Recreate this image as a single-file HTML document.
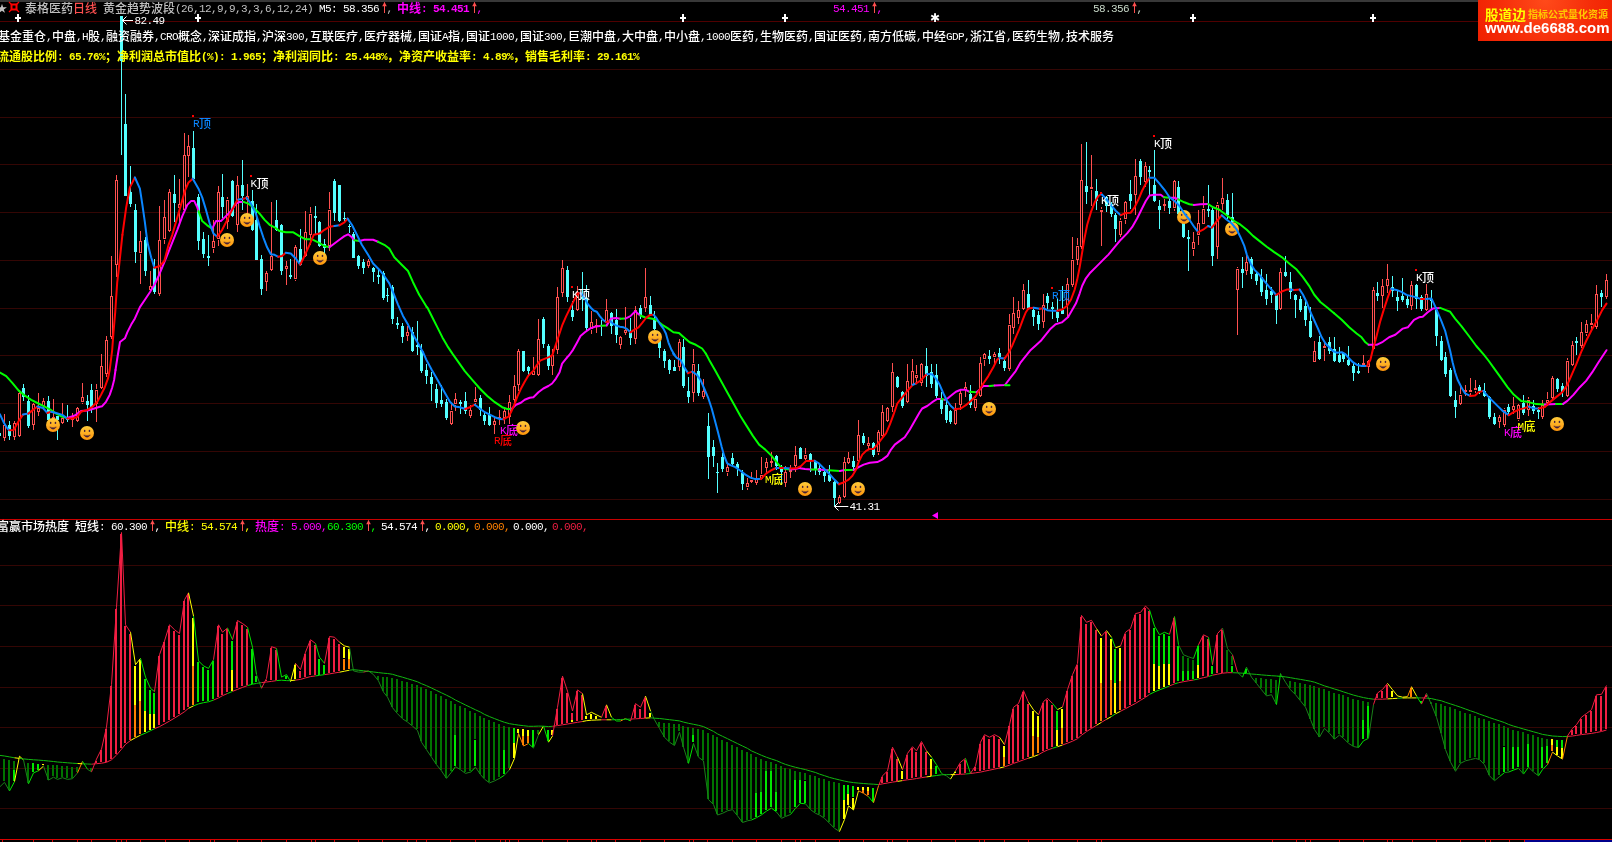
<!DOCTYPE html>
<html><head><meta charset="utf-8"><title>泰格医药 日线</title>
<style>
html,body{margin:0;padding:0;background:#000;}
body{width:1612px;height:842px;position:relative;overflow:hidden;font-family:"Liberation Mono","Noto Sans CJK SC",monospace;}
.t{position:absolute;white-space:pre;line-height:12px;height:12px;}
.a{font-family:"Liberation Mono",monospace;font-size:11px;letter-spacing:-0.6px;}
.c{font-family:"Noto Sans CJK SC","WenQuanYi Zen Hei",sans-serif;font-size:12px;font-weight:500;}
.b{font-weight:700;}
.ab{position:absolute;overflow:visible}
#wrap{position:absolute;left:0;top:0;width:1612px;height:842px;overflow:hidden;will-change:transform;}
svg{position:absolute;left:0;top:0}
.sm{position:absolute;width:14.1px;height:14.1px;border-radius:50%;background:linear-gradient(#ffcc3a,#ffb024 50%,#ff960c);}
</style></head><body>
<div id="wrap">
<svg width="1612" height="842" viewBox="0 0 1612 842">
<g shape-rendering="crispEdges">
<rect x="0" y="21" width="1612" height="1" fill="#500000"/>
<rect x="0" y="69" width="1612" height="1" fill="#340604"/>
<rect x="0" y="117" width="1612" height="1" fill="#340604"/>
<rect x="0" y="164" width="1612" height="1" fill="#340604"/>
<rect x="0" y="212" width="1612" height="1" fill="#340604"/>
<rect x="0" y="260" width="1612" height="1" fill="#340604"/>
<rect x="0" y="308" width="1612" height="1" fill="#340604"/>
<rect x="0" y="355" width="1612" height="1" fill="#340604"/>
<rect x="0" y="403" width="1612" height="1" fill="#340604"/>
<rect x="0" y="451" width="1612" height="1" fill="#340604"/>
<rect x="0" y="499" width="1612" height="1" fill="#340604"/>
<rect x="0" y="519" width="1612" height="1" fill="#c80000"/>
<rect x="0" y="565" width="1612" height="1" fill="#340604"/>
<rect x="0" y="605" width="1612" height="1" fill="#340604"/>
<rect x="0" y="646" width="1612" height="1" fill="#340604"/>
<rect x="0" y="687" width="1612" height="1" fill="#340604"/>
<rect x="0" y="727" width="1612" height="1" fill="#340604"/>
<rect x="0" y="768" width="1612" height="1" fill="#340604"/>
<rect x="0" y="808" width="1612" height="1" fill="#340604"/>
<rect x="0" y="839" width="1612" height="1" fill="#d80000"/>
</g>
<g shape-rendering="crispEdges">
<rect x="-1" y="431" width="1" height="6" fill="#54ffff"/>
<rect x="-2" y="433" width="3" height="3" fill="#54ffff"/>
<rect x="4" y="414" width="1" height="11" fill="#ff5050"/>
<rect x="4" y="438" width="1" height="3" fill="#ff5050"/>
<rect x="3.5" y="425.5" width="2" height="12" fill="#000" stroke="#ff5050" stroke-width="1"/>
<rect x="9" y="421" width="1" height="19" fill="#54ffff"/>
<rect x="8" y="425" width="3" height="11" fill="#54ffff"/>
<rect x="14" y="421" width="1" height="2" fill="#ff5050"/>
<rect x="14" y="437" width="1" height="3" fill="#ff5050"/>
<rect x="13.5" y="423.5" width="2" height="13" fill="#000" stroke="#ff5050" stroke-width="1"/>
<rect x="19" y="390" width="1" height="3" fill="#ff5050"/>
<rect x="19" y="436" width="1" height="1" fill="#ff5050"/>
<rect x="18.5" y="393.5" width="2" height="42" fill="#000" stroke="#ff5050" stroke-width="1"/>
<rect x="23" y="384" width="1" height="17" fill="#54ffff"/>
<rect x="22" y="388" width="3" height="9" fill="#54ffff"/>
<rect x="28" y="395" width="1" height="33" fill="#54ffff"/>
<rect x="27" y="401" width="3" height="25" fill="#54ffff"/>
<rect x="33" y="403" width="1" height="1" fill="#ff5050"/>
<rect x="33" y="425" width="1" height="5" fill="#ff5050"/>
<rect x="32.5" y="404.5" width="2" height="20" fill="#000" stroke="#ff5050" stroke-width="1"/>
<rect x="38" y="393" width="1" height="15" fill="#ff5050"/>
<rect x="38" y="412" width="1" height="4" fill="#ff5050"/>
<rect x="37.5" y="408.5" width="2" height="3" fill="#000" stroke="#ff5050" stroke-width="1"/>
<rect x="43" y="398" width="1" height="3" fill="#ff5050"/>
<rect x="43" y="406" width="1" height="4" fill="#ff5050"/>
<rect x="42.5" y="401.5" width="2" height="4" fill="#000" stroke="#ff5050" stroke-width="1"/>
<rect x="48" y="396" width="1" height="26" fill="#54ffff"/>
<rect x="47" y="401" width="3" height="19" fill="#54ffff"/>
<rect x="53" y="399" width="1" height="18" fill="#ff5050"/>
<rect x="52.5" y="417.5" width="2" height="1" fill="#000" stroke="#ff5050" stroke-width="1"/>
<rect x="57" y="416" width="1" height="24" fill="#54ffff"/>
<rect x="56" y="416" width="3" height="4" fill="#54ffff"/>
<rect x="62" y="403" width="1" height="14" fill="#ff5050"/>
<rect x="62" y="423" width="1" height="1" fill="#ff5050"/>
<rect x="61.5" y="418.5" width="2" height="4" fill="#000" stroke="#ff5050" stroke-width="1"/>
<rect x="67" y="405" width="1" height="17" fill="#54ffff"/>
<rect x="66" y="417" width="3" height="3" fill="#54ffff"/>
<rect x="72" y="413" width="1" height="3" fill="#ff5050"/>
<rect x="72" y="420" width="1" height="7" fill="#ff5050"/>
<rect x="71.5" y="417.5" width="2" height="2" fill="#000" stroke="#ff5050" stroke-width="1"/>
<rect x="77" y="407" width="1" height="1" fill="#ff5050"/>
<rect x="77" y="421" width="1" height="1" fill="#ff5050"/>
<rect x="76.5" y="408.5" width="2" height="12" fill="#000" stroke="#ff5050" stroke-width="1"/>
<rect x="82" y="383" width="1" height="14" fill="#ff5050"/>
<rect x="82" y="403" width="1" height="1" fill="#ff5050"/>
<rect x="81.5" y="397.5" width="2" height="4" fill="#000" stroke="#ff5050" stroke-width="1"/>
<rect x="87" y="395" width="1" height="26" fill="#54ffff"/>
<rect x="86" y="401" width="3" height="4" fill="#54ffff"/>
<rect x="91" y="384" width="1" height="29" fill="#54ffff"/>
<rect x="90" y="390" width="3" height="17" fill="#54ffff"/>
<rect x="96" y="384" width="1" height="5" fill="#ff5050"/>
<rect x="96" y="403" width="1" height="19" fill="#ff5050"/>
<rect x="95.5" y="390.5" width="2" height="13" fill="#000" stroke="#ff5050" stroke-width="1"/>
<rect x="101" y="354" width="1" height="12" fill="#ff5050"/>
<rect x="101" y="388" width="1" height="1" fill="#ff5050"/>
<rect x="100.5" y="366.5" width="2" height="21" fill="#000" stroke="#ff5050" stroke-width="1"/>
<rect x="106" y="336" width="1" height="4" fill="#ff5050"/>
<rect x="106" y="373" width="1" height="4" fill="#ff5050"/>
<rect x="105.5" y="340.5" width="2" height="33" fill="#000" stroke="#ff5050" stroke-width="1"/>
<rect x="111" y="256" width="1" height="40" fill="#ff5050"/>
<rect x="111" y="337" width="1" height="2" fill="#ff5050"/>
<rect x="110.5" y="296.5" width="2" height="40" fill="#000" stroke="#ff5050" stroke-width="1"/>
<rect x="116" y="175" width="1" height="5" fill="#ff5050"/>
<rect x="116" y="265" width="1" height="12" fill="#ff5050"/>
<rect x="115.5" y="180.5" width="2" height="84" fill="#000" stroke="#ff5050" stroke-width="1"/>
<rect x="121" y="16" width="1" height="139" fill="#54ffff"/>
<rect x="120" y="16" width="3" height="45" fill="#54ffff"/>
<rect x="125" y="94" width="1" height="102" fill="#54ffff"/>
<rect x="124" y="124" width="3" height="72" fill="#54ffff"/>
<rect x="130" y="166" width="1" height="41" fill="#54ffff"/>
<rect x="129" y="192" width="3" height="12" fill="#54ffff"/>
<rect x="135" y="204" width="1" height="59" fill="#54ffff"/>
<rect x="134" y="210" width="3" height="42" fill="#54ffff"/>
<rect x="140" y="231" width="1" height="10" fill="#ff5050"/>
<rect x="140" y="254" width="1" height="30" fill="#ff5050"/>
<rect x="139.5" y="241.5" width="2" height="11" fill="#000" stroke="#ff5050" stroke-width="1"/>
<rect x="145" y="237" width="1" height="39" fill="#54ffff"/>
<rect x="144" y="240" width="3" height="31" fill="#54ffff"/>
<rect x="150" y="271" width="1" height="15" fill="#ff5050"/>
<rect x="150" y="290" width="1" height="2" fill="#ff5050"/>
<rect x="149.5" y="286.5" width="2" height="3" fill="#000" stroke="#ff5050" stroke-width="1"/>
<rect x="154" y="259" width="1" height="35" fill="#54ffff"/>
<rect x="153" y="268" width="3" height="24" fill="#54ffff"/>
<rect x="159" y="206" width="1" height="34" fill="#ff5050"/>
<rect x="159" y="293" width="1" height="3" fill="#ff5050"/>
<rect x="158.5" y="240.5" width="2" height="53" fill="#000" stroke="#ff5050" stroke-width="1"/>
<rect x="164" y="200" width="1" height="17" fill="#ff5050"/>
<rect x="164" y="240" width="1" height="4" fill="#ff5050"/>
<rect x="163.5" y="217.5" width="2" height="21" fill="#000" stroke="#ff5050" stroke-width="1"/>
<rect x="169" y="189" width="1" height="4" fill="#ff5050"/>
<rect x="169" y="231" width="1" height="1" fill="#ff5050"/>
<rect x="168.5" y="192.5" width="2" height="38" fill="#000" stroke="#ff5050" stroke-width="1"/>
<rect x="174" y="175" width="1" height="47" fill="#54ffff"/>
<rect x="173" y="194" width="3" height="9" fill="#54ffff"/>
<rect x="179" y="179" width="1" height="25" fill="#ff5050"/>
<rect x="179" y="207" width="1" height="16" fill="#ff5050"/>
<rect x="178.5" y="204.5" width="2" height="3" fill="#000" stroke="#ff5050" stroke-width="1"/>
<rect x="184" y="133" width="1" height="22" fill="#ff5050"/>
<rect x="184" y="210" width="1" height="1" fill="#ff5050"/>
<rect x="183.5" y="155.5" width="2" height="54" fill="#000" stroke="#ff5050" stroke-width="1"/>
<rect x="188" y="135" width="1" height="11" fill="#ff5050"/>
<rect x="188" y="156" width="1" height="21" fill="#ff5050"/>
<rect x="187.5" y="146.5" width="2" height="9" fill="#000" stroke="#ff5050" stroke-width="1"/>
<rect x="193" y="131" width="1" height="49" fill="#54ffff"/>
<rect x="192" y="148" width="3" height="31" fill="#54ffff"/>
<rect x="198" y="194" width="1" height="56" fill="#54ffff"/>
<rect x="197" y="197" width="3" height="44" fill="#54ffff"/>
<rect x="203" y="232" width="1" height="26" fill="#54ffff"/>
<rect x="202" y="239" width="3" height="15" fill="#54ffff"/>
<rect x="208" y="235" width="1" height="31" fill="#54ffff"/>
<rect x="207" y="256" width="3" height="2" fill="#54ffff"/>
<rect x="213" y="220" width="1" height="21" fill="#ff5050"/>
<rect x="213" y="249" width="1" height="4" fill="#ff5050"/>
<rect x="212.5" y="241.5" width="2" height="6" fill="#000" stroke="#ff5050" stroke-width="1"/>
<rect x="218" y="186" width="1" height="6" fill="#ff5050"/>
<rect x="218" y="240" width="1" height="6" fill="#ff5050"/>
<rect x="217.5" y="192.5" width="2" height="46" fill="#000" stroke="#ff5050" stroke-width="1"/>
<rect x="222" y="174" width="1" height="44" fill="#54ffff"/>
<rect x="221" y="197" width="3" height="10" fill="#54ffff"/>
<rect x="227" y="197" width="1" height="2" fill="#ff5050"/>
<rect x="227" y="222" width="1" height="7" fill="#ff5050"/>
<rect x="226.5" y="200.5" width="2" height="21" fill="#000" stroke="#ff5050" stroke-width="1"/>
<rect x="232" y="180" width="1" height="37" fill="#54ffff"/>
<rect x="231" y="181" width="3" height="35" fill="#54ffff"/>
<rect x="237" y="176" width="1" height="9" fill="#ff5050"/>
<rect x="237" y="225" width="1" height="7" fill="#ff5050"/>
<rect x="236.5" y="185.5" width="2" height="39" fill="#000" stroke="#ff5050" stroke-width="1"/>
<rect x="242" y="160" width="1" height="50" fill="#54ffff"/>
<rect x="241" y="185" width="3" height="11" fill="#54ffff"/>
<rect x="247" y="184" width="1" height="12" fill="#ff5050"/>
<rect x="247" y="200" width="1" height="15" fill="#ff5050"/>
<rect x="246.5" y="196.5" width="2" height="3" fill="#000" stroke="#ff5050" stroke-width="1"/>
<rect x="252" y="190" width="1" height="41" fill="#54ffff"/>
<rect x="251" y="201" width="3" height="29" fill="#54ffff"/>
<rect x="256" y="204" width="1" height="56" fill="#54ffff"/>
<rect x="255" y="220" width="3" height="40" fill="#54ffff"/>
<rect x="261" y="255" width="1" height="40" fill="#54ffff"/>
<rect x="260" y="259" width="3" height="30" fill="#54ffff"/>
<rect x="266" y="271" width="1" height="2" fill="#ff5050"/>
<rect x="266" y="282" width="1" height="9" fill="#ff5050"/>
<rect x="265.5" y="273.5" width="2" height="8" fill="#000" stroke="#ff5050" stroke-width="1"/>
<rect x="271" y="202" width="1" height="54" fill="#ff5050"/>
<rect x="271" y="270" width="1" height="1" fill="#ff5050"/>
<rect x="270.5" y="256.5" width="2" height="13" fill="#000" stroke="#ff5050" stroke-width="1"/>
<rect x="276" y="200" width="1" height="31" fill="#54ffff"/>
<rect x="275" y="220" width="3" height="10" fill="#54ffff"/>
<rect x="281" y="224" width="1" height="51" fill="#54ffff"/>
<rect x="280" y="225" width="3" height="46" fill="#54ffff"/>
<rect x="286" y="261" width="1" height="5" fill="#ff5050"/>
<rect x="286" y="269" width="1" height="16" fill="#ff5050"/>
<rect x="285.5" y="266.5" width="2" height="2" fill="#000" stroke="#ff5050" stroke-width="1"/>
<rect x="290" y="259" width="1" height="20" fill="#54ffff"/>
<rect x="289" y="275" width="3" height="2" fill="#54ffff"/>
<rect x="295" y="245" width="1" height="2" fill="#ff5050"/>
<rect x="295" y="280" width="1" height="1" fill="#ff5050"/>
<rect x="294.5" y="247.5" width="2" height="31" fill="#000" stroke="#ff5050" stroke-width="1"/>
<rect x="300" y="229" width="1" height="37" fill="#54ffff"/>
<rect x="299" y="249" width="3" height="16" fill="#54ffff"/>
<rect x="305" y="211" width="1" height="21" fill="#ff5050"/>
<rect x="305" y="256" width="1" height="1" fill="#ff5050"/>
<rect x="304.5" y="232.5" width="2" height="23" fill="#000" stroke="#ff5050" stroke-width="1"/>
<rect x="310" y="207" width="1" height="6" fill="#ff5050"/>
<rect x="310" y="235" width="1" height="10" fill="#ff5050"/>
<rect x="309.5" y="214.5" width="2" height="20" fill="#000" stroke="#ff5050" stroke-width="1"/>
<rect x="315" y="206" width="1" height="29" fill="#54ffff"/>
<rect x="314" y="216" width="3" height="2" fill="#54ffff"/>
<rect x="319" y="221" width="1" height="26" fill="#54ffff"/>
<rect x="318" y="222" width="3" height="24" fill="#54ffff"/>
<rect x="324" y="239" width="1" height="14" fill="#54ffff"/>
<rect x="323" y="244" width="3" height="4" fill="#54ffff"/>
<rect x="329" y="192" width="1" height="17" fill="#ff5050"/>
<rect x="329" y="246" width="1" height="5" fill="#ff5050"/>
<rect x="328.5" y="210.5" width="2" height="35" fill="#000" stroke="#ff5050" stroke-width="1"/>
<rect x="334" y="179" width="1" height="42" fill="#54ffff"/>
<rect x="333" y="181" width="3" height="32" fill="#54ffff"/>
<rect x="339" y="185" width="1" height="37" fill="#54ffff"/>
<rect x="338" y="185" width="3" height="36" fill="#54ffff"/>
<rect x="344" y="212" width="1" height="10" fill="#54ffff"/>
<rect x="343" y="218" width="3" height="1" fill="#54ffff"/>
<rect x="349" y="224" width="1" height="9" fill="#54ffff"/>
<rect x="348" y="226" width="3" height="1" fill="#54ffff"/>
<rect x="353" y="232" width="1" height="26" fill="#54ffff"/>
<rect x="352" y="234" width="3" height="24" fill="#54ffff"/>
<rect x="358" y="255" width="1" height="14" fill="#54ffff"/>
<rect x="357" y="256" width="3" height="10" fill="#54ffff"/>
<rect x="363" y="259" width="1" height="15" fill="#54ffff"/>
<rect x="362" y="262" width="3" height="6" fill="#54ffff"/>
<rect x="368" y="259" width="1" height="2" fill="#ff5050"/>
<rect x="368" y="266" width="1" height="2" fill="#ff5050"/>
<rect x="367.5" y="261.5" width="2" height="4" fill="#000" stroke="#ff5050" stroke-width="1"/>
<rect x="373" y="267" width="1" height="15" fill="#54ffff"/>
<rect x="372" y="268" width="3" height="4" fill="#54ffff"/>
<rect x="378" y="270" width="1" height="14" fill="#54ffff"/>
<rect x="377" y="275" width="3" height="2" fill="#54ffff"/>
<rect x="383" y="271" width="1" height="29" fill="#54ffff"/>
<rect x="382" y="273" width="3" height="25" fill="#54ffff"/>
<rect x="387" y="288" width="1" height="14" fill="#54ffff"/>
<rect x="386" y="295" width="3" height="1" fill="#54ffff"/>
<rect x="392" y="285" width="1" height="39" fill="#54ffff"/>
<rect x="391" y="287" width="3" height="32" fill="#54ffff"/>
<rect x="397" y="317" width="1" height="12" fill="#54ffff"/>
<rect x="396" y="323" width="3" height="2" fill="#54ffff"/>
<rect x="402" y="323" width="1" height="20" fill="#54ffff"/>
<rect x="401" y="326" width="3" height="11" fill="#54ffff"/>
<rect x="407" y="326" width="1" height="6" fill="#ff5050"/>
<rect x="407" y="336" width="1" height="5" fill="#ff5050"/>
<rect x="406.5" y="332.5" width="2" height="3" fill="#000" stroke="#ff5050" stroke-width="1"/>
<rect x="412" y="327" width="1" height="25" fill="#54ffff"/>
<rect x="411" y="332" width="3" height="19" fill="#54ffff"/>
<rect x="417" y="321" width="1" height="34" fill="#54ffff"/>
<rect x="416" y="345" width="3" height="2" fill="#54ffff"/>
<rect x="421" y="344" width="1" height="29" fill="#54ffff"/>
<rect x="420" y="350" width="3" height="21" fill="#54ffff"/>
<rect x="426" y="364" width="1" height="20" fill="#54ffff"/>
<rect x="425" y="370" width="3" height="6" fill="#54ffff"/>
<rect x="431" y="372" width="1" height="29" fill="#54ffff"/>
<rect x="430" y="377" width="3" height="7" fill="#54ffff"/>
<rect x="436" y="384" width="1" height="24" fill="#54ffff"/>
<rect x="435" y="389" width="3" height="14" fill="#54ffff"/>
<rect x="441" y="385" width="1" height="22" fill="#54ffff"/>
<rect x="440" y="400" width="3" height="4" fill="#54ffff"/>
<rect x="446" y="399" width="1" height="21" fill="#54ffff"/>
<rect x="445" y="402" width="3" height="16" fill="#54ffff"/>
<rect x="451" y="403" width="1" height="7" fill="#ff5050"/>
<rect x="451" y="424" width="1" height="1" fill="#ff5050"/>
<rect x="450.5" y="411.5" width="2" height="12" fill="#000" stroke="#ff5050" stroke-width="1"/>
<rect x="455" y="393" width="1" height="6" fill="#ff5050"/>
<rect x="455" y="405" width="1" height="6" fill="#ff5050"/>
<rect x="454.5" y="399.5" width="2" height="4" fill="#000" stroke="#ff5050" stroke-width="1"/>
<rect x="460" y="400" width="1" height="14" fill="#54ffff"/>
<rect x="459" y="402" width="3" height="2" fill="#54ffff"/>
<rect x="465" y="392" width="1" height="22" fill="#54ffff"/>
<rect x="464" y="401" width="3" height="10" fill="#54ffff"/>
<rect x="470" y="405" width="1" height="5" fill="#ff5050"/>
<rect x="470" y="416" width="1" height="2" fill="#ff5050"/>
<rect x="469.5" y="410.5" width="2" height="5" fill="#000" stroke="#ff5050" stroke-width="1"/>
<rect x="475" y="387" width="1" height="12" fill="#ff5050"/>
<rect x="475" y="403" width="1" height="2" fill="#ff5050"/>
<rect x="474.5" y="399.5" width="2" height="2" fill="#000" stroke="#ff5050" stroke-width="1"/>
<rect x="480" y="395" width="1" height="21" fill="#54ffff"/>
<rect x="479" y="398" width="3" height="12" fill="#54ffff"/>
<rect x="484" y="413" width="1" height="12" fill="#54ffff"/>
<rect x="483" y="415" width="3" height="6" fill="#54ffff"/>
<rect x="489" y="407" width="1" height="19" fill="#54ffff"/>
<rect x="488" y="415" width="3" height="10" fill="#54ffff"/>
<rect x="494" y="416" width="1" height="5" fill="#ff5050"/>
<rect x="494" y="425" width="1" height="9" fill="#ff5050"/>
<rect x="493.5" y="421.5" width="2" height="3" fill="#000" stroke="#ff5050" stroke-width="1"/>
<rect x="499" y="410" width="1" height="7" fill="#ff5050"/>
<rect x="499" y="420" width="1" height="5" fill="#ff5050"/>
<rect x="498.5" y="417.5" width="2" height="1" fill="#000" stroke="#ff5050" stroke-width="1"/>
<rect x="504" y="407" width="1" height="4" fill="#ff5050"/>
<rect x="504" y="418" width="1" height="6" fill="#ff5050"/>
<rect x="503.5" y="411.5" width="2" height="6" fill="#000" stroke="#ff5050" stroke-width="1"/>
<rect x="509" y="395" width="1" height="7" fill="#ff5050"/>
<rect x="509" y="417" width="1" height="7" fill="#ff5050"/>
<rect x="508.5" y="402.5" width="2" height="14" fill="#000" stroke="#ff5050" stroke-width="1"/>
<rect x="514" y="375" width="1" height="11" fill="#ff5050"/>
<rect x="514" y="400" width="1" height="5" fill="#ff5050"/>
<rect x="513.5" y="386.5" width="2" height="13" fill="#000" stroke="#ff5050" stroke-width="1"/>
<rect x="518" y="349" width="1" height="2" fill="#ff5050"/>
<rect x="518" y="385" width="1" height="6" fill="#ff5050"/>
<rect x="517.5" y="351.5" width="2" height="33" fill="#000" stroke="#ff5050" stroke-width="1"/>
<rect x="523" y="351" width="1" height="21" fill="#54ffff"/>
<rect x="522" y="351" width="3" height="20" fill="#54ffff"/>
<rect x="528" y="366" width="1" height="9" fill="#54ffff"/>
<rect x="527" y="367" width="3" height="4" fill="#54ffff"/>
<rect x="533" y="357" width="1" height="14" fill="#ff5050"/>
<rect x="532.5" y="371.5" width="2" height="3" fill="#000" stroke="#ff5050" stroke-width="1"/>
<rect x="538" y="319" width="1" height="20" fill="#ff5050"/>
<rect x="538" y="375" width="1" height="1" fill="#ff5050"/>
<rect x="537.5" y="339.5" width="2" height="35" fill="#000" stroke="#ff5050" stroke-width="1"/>
<rect x="543" y="317" width="1" height="31" fill="#54ffff"/>
<rect x="542" y="319" width="3" height="25" fill="#54ffff"/>
<rect x="548" y="344" width="1" height="26" fill="#54ffff"/>
<rect x="547" y="346" width="3" height="20" fill="#54ffff"/>
<rect x="552" y="349" width="1" height="6" fill="#ff5050"/>
<rect x="552" y="366" width="1" height="9" fill="#ff5050"/>
<rect x="551.5" y="355.5" width="2" height="10" fill="#000" stroke="#ff5050" stroke-width="1"/>
<rect x="557" y="287" width="1" height="10" fill="#ff5050"/>
<rect x="557" y="350" width="1" height="4" fill="#ff5050"/>
<rect x="556.5" y="297.5" width="2" height="52" fill="#000" stroke="#ff5050" stroke-width="1"/>
<rect x="562" y="260" width="1" height="8" fill="#ff5050"/>
<rect x="562" y="293" width="1" height="4" fill="#ff5050"/>
<rect x="561.5" y="268.5" width="2" height="24" fill="#000" stroke="#ff5050" stroke-width="1"/>
<rect x="567" y="266" width="1" height="36" fill="#54ffff"/>
<rect x="566" y="270" width="3" height="27" fill="#54ffff"/>
<rect x="572" y="301" width="1" height="20" fill="#54ffff"/>
<rect x="571" y="310" width="3" height="7" fill="#54ffff"/>
<rect x="577" y="286" width="1" height="6" fill="#ff5050"/>
<rect x="577" y="310" width="1" height="1" fill="#ff5050"/>
<rect x="576.5" y="292.5" width="2" height="17" fill="#000" stroke="#ff5050" stroke-width="1"/>
<rect x="582" y="272" width="1" height="39" fill="#54ffff"/>
<rect x="581" y="297" width="3" height="2" fill="#54ffff"/>
<rect x="586" y="285" width="1" height="46" fill="#54ffff"/>
<rect x="585" y="299" width="3" height="29" fill="#54ffff"/>
<rect x="591" y="311" width="1" height="11" fill="#ff5050"/>
<rect x="591" y="330" width="1" height="4" fill="#ff5050"/>
<rect x="590.5" y="322.5" width="2" height="6" fill="#000" stroke="#ff5050" stroke-width="1"/>
<rect x="596" y="319" width="1" height="6" fill="#ff5050"/>
<rect x="596" y="326" width="1" height="7" fill="#ff5050"/>
<rect x="595.5" y="325.5" width="2" height="1" fill="#000" stroke="#ff5050" stroke-width="1"/>
<rect x="601" y="320" width="1" height="16" fill="#54ffff"/>
<rect x="600" y="325" width="3" height="1" fill="#54ffff"/>
<rect x="606" y="299" width="1" height="11" fill="#ff5050"/>
<rect x="606" y="324" width="1" height="2" fill="#ff5050"/>
<rect x="605.5" y="310.5" width="2" height="12" fill="#000" stroke="#ff5050" stroke-width="1"/>
<rect x="611" y="312" width="1" height="22" fill="#54ffff"/>
<rect x="610" y="313" width="3" height="13" fill="#54ffff"/>
<rect x="616" y="309" width="1" height="34" fill="#54ffff"/>
<rect x="615" y="320" width="3" height="15" fill="#54ffff"/>
<rect x="620" y="336" width="1" height="1" fill="#ff5050"/>
<rect x="620" y="345" width="1" height="4" fill="#ff5050"/>
<rect x="619.5" y="337.5" width="2" height="7" fill="#000" stroke="#ff5050" stroke-width="1"/>
<rect x="625" y="307" width="1" height="23" fill="#ff5050"/>
<rect x="625" y="333" width="1" height="2" fill="#ff5050"/>
<rect x="624.5" y="330.5" width="2" height="2" fill="#000" stroke="#ff5050" stroke-width="1"/>
<rect x="630" y="318" width="1" height="27" fill="#54ffff"/>
<rect x="629" y="332" width="3" height="6" fill="#54ffff"/>
<rect x="635" y="306" width="1" height="4" fill="#ff5050"/>
<rect x="635" y="339" width="1" height="5" fill="#ff5050"/>
<rect x="634.5" y="310.5" width="2" height="28" fill="#000" stroke="#ff5050" stroke-width="1"/>
<rect x="640" y="305" width="1" height="14" fill="#54ffff"/>
<rect x="639" y="308" width="3" height="8" fill="#54ffff"/>
<rect x="645" y="268" width="1" height="29" fill="#ff5050"/>
<rect x="645" y="308" width="1" height="4" fill="#ff5050"/>
<rect x="644.5" y="297.5" width="2" height="10" fill="#000" stroke="#ff5050" stroke-width="1"/>
<rect x="650" y="296" width="1" height="20" fill="#54ffff"/>
<rect x="649" y="305" width="3" height="10" fill="#54ffff"/>
<rect x="654" y="311" width="1" height="19" fill="#54ffff"/>
<rect x="653" y="320" width="3" height="9" fill="#54ffff"/>
<rect x="659" y="337" width="1" height="21" fill="#54ffff"/>
<rect x="658" y="341" width="3" height="7" fill="#54ffff"/>
<rect x="664" y="349" width="1" height="19" fill="#54ffff"/>
<rect x="663" y="351" width="3" height="10" fill="#54ffff"/>
<rect x="669" y="359" width="1" height="15" fill="#54ffff"/>
<rect x="668" y="360" width="3" height="10" fill="#54ffff"/>
<rect x="674" y="360" width="1" height="11" fill="#54ffff"/>
<rect x="673" y="367" width="3" height="4" fill="#54ffff"/>
<rect x="679" y="339" width="1" height="4" fill="#ff5050"/>
<rect x="679" y="367" width="1" height="4" fill="#ff5050"/>
<rect x="678.5" y="342.5" width="2" height="24" fill="#000" stroke="#ff5050" stroke-width="1"/>
<rect x="683" y="339" width="1" height="49" fill="#54ffff"/>
<rect x="682" y="347" width="3" height="39" fill="#54ffff"/>
<rect x="688" y="377" width="1" height="26" fill="#54ffff"/>
<rect x="687" y="391" width="3" height="6" fill="#54ffff"/>
<rect x="693" y="349" width="1" height="14" fill="#ff5050"/>
<rect x="693" y="392" width="1" height="10" fill="#ff5050"/>
<rect x="692.5" y="364.5" width="2" height="28" fill="#000" stroke="#ff5050" stroke-width="1"/>
<rect x="698" y="364" width="1" height="32" fill="#54ffff"/>
<rect x="697" y="371" width="3" height="22" fill="#54ffff"/>
<rect x="703" y="379" width="1" height="12" fill="#ff5050"/>
<rect x="703" y="397" width="1" height="2" fill="#ff5050"/>
<rect x="702.5" y="391.5" width="2" height="5" fill="#000" stroke="#ff5050" stroke-width="1"/>
<rect x="708" y="413" width="1" height="66" fill="#54ffff"/>
<rect x="707" y="426" width="3" height="31" fill="#54ffff"/>
<rect x="713" y="440" width="1" height="27" fill="#54ffff"/>
<rect x="712" y="447" width="3" height="9" fill="#54ffff"/>
<rect x="717" y="463" width="1" height="30" fill="#54ffff"/>
<rect x="716" y="472" width="3" height="1" fill="#54ffff"/>
<rect x="722" y="453" width="1" height="19" fill="#54ffff"/>
<rect x="721" y="457" width="3" height="12" fill="#54ffff"/>
<rect x="727" y="463" width="1" height="4" fill="#ff5050"/>
<rect x="727" y="473" width="1" height="3" fill="#ff5050"/>
<rect x="726.5" y="467.5" width="2" height="4" fill="#000" stroke="#ff5050" stroke-width="1"/>
<rect x="732" y="453" width="1" height="12" fill="#54ffff"/>
<rect x="731" y="458" width="3" height="6" fill="#54ffff"/>
<rect x="737" y="462" width="1" height="14" fill="#54ffff"/>
<rect x="736" y="464" width="3" height="4" fill="#54ffff"/>
<rect x="742" y="470" width="1" height="20" fill="#54ffff"/>
<rect x="741" y="473" width="3" height="11" fill="#54ffff"/>
<rect x="747" y="478" width="1" height="5" fill="#ff5050"/>
<rect x="747" y="488" width="1" height="2" fill="#ff5050"/>
<rect x="746.5" y="483.5" width="2" height="3" fill="#000" stroke="#ff5050" stroke-width="1"/>
<rect x="751" y="472" width="1" height="7" fill="#ff5050"/>
<rect x="751" y="482" width="1" height="1" fill="#ff5050"/>
<rect x="750.5" y="480.5" width="2" height="1" fill="#000" stroke="#ff5050" stroke-width="1"/>
<rect x="756" y="470" width="1" height="9" fill="#ff5050"/>
<rect x="756" y="483" width="1" height="2" fill="#ff5050"/>
<rect x="755.5" y="478.5" width="2" height="4" fill="#000" stroke="#ff5050" stroke-width="1"/>
<rect x="761" y="457" width="1" height="17" fill="#ff5050"/>
<rect x="761" y="478" width="1" height="1" fill="#ff5050"/>
<rect x="760.5" y="475.5" width="2" height="3" fill="#000" stroke="#ff5050" stroke-width="1"/>
<rect x="766" y="458" width="1" height="4" fill="#ff5050"/>
<rect x="766" y="468" width="1" height="6" fill="#ff5050"/>
<rect x="765.5" y="462.5" width="2" height="5" fill="#000" stroke="#ff5050" stroke-width="1"/>
<rect x="771" y="452" width="1" height="9" fill="#ff5050"/>
<rect x="771" y="463" width="1" height="4" fill="#ff5050"/>
<rect x="770.5" y="461.5" width="2" height="1" fill="#000" stroke="#ff5050" stroke-width="1"/>
<rect x="776" y="455" width="1" height="15" fill="#54ffff"/>
<rect x="775" y="456" width="3" height="10" fill="#54ffff"/>
<rect x="781" y="465" width="1" height="20" fill="#54ffff"/>
<rect x="780" y="467" width="3" height="5" fill="#54ffff"/>
<rect x="785" y="466" width="1" height="6" fill="#ff5050"/>
<rect x="785" y="483" width="1" height="4" fill="#ff5050"/>
<rect x="784.5" y="472.5" width="2" height="10" fill="#000" stroke="#ff5050" stroke-width="1"/>
<rect x="790" y="465" width="1" height="5" fill="#ff5050"/>
<rect x="790" y="472" width="1" height="6" fill="#ff5050"/>
<rect x="789.5" y="470.5" width="2" height="1" fill="#000" stroke="#ff5050" stroke-width="1"/>
<rect x="795" y="446" width="1" height="9" fill="#ff5050"/>
<rect x="795" y="466" width="1" height="6" fill="#ff5050"/>
<rect x="794.5" y="455.5" width="2" height="10" fill="#000" stroke="#ff5050" stroke-width="1"/>
<rect x="800" y="447" width="1" height="12" fill="#54ffff"/>
<rect x="799" y="448" width="3" height="11" fill="#54ffff"/>
<rect x="805" y="448" width="1" height="6" fill="#ff5050"/>
<rect x="805" y="459" width="1" height="1" fill="#ff5050"/>
<rect x="804.5" y="455.5" width="2" height="3" fill="#000" stroke="#ff5050" stroke-width="1"/>
<rect x="810" y="453" width="1" height="19" fill="#54ffff"/>
<rect x="809" y="454" width="3" height="7" fill="#54ffff"/>
<rect x="815" y="461" width="1" height="14" fill="#54ffff"/>
<rect x="814" y="462" width="3" height="7" fill="#54ffff"/>
<rect x="819" y="465" width="1" height="10" fill="#54ffff"/>
<rect x="818" y="468" width="3" height="4" fill="#54ffff"/>
<rect x="824" y="470" width="1" height="12" fill="#54ffff"/>
<rect x="823" y="472" width="3" height="4" fill="#54ffff"/>
<rect x="829" y="465" width="1" height="17" fill="#54ffff"/>
<rect x="828" y="475" width="3" height="6" fill="#54ffff"/>
<rect x="834" y="481" width="1" height="25" fill="#54ffff"/>
<rect x="833" y="482" width="3" height="16" fill="#54ffff"/>
<rect x="839" y="495" width="1" height="2" fill="#ff5050"/>
<rect x="839" y="503" width="1" height="1" fill="#ff5050"/>
<rect x="838.5" y="497.5" width="2" height="5" fill="#000" stroke="#ff5050" stroke-width="1"/>
<rect x="844" y="457" width="1" height="5" fill="#ff5050"/>
<rect x="844" y="497" width="1" height="1" fill="#ff5050"/>
<rect x="843.5" y="462.5" width="2" height="34" fill="#000" stroke="#ff5050" stroke-width="1"/>
<rect x="848" y="452" width="1" height="7" fill="#ff5050"/>
<rect x="848" y="463" width="1" height="1" fill="#ff5050"/>
<rect x="847.5" y="458.5" width="2" height="4" fill="#000" stroke="#ff5050" stroke-width="1"/>
<rect x="853" y="456" width="1" height="14" fill="#54ffff"/>
<rect x="852" y="461" width="3" height="6" fill="#54ffff"/>
<rect x="858" y="420" width="1" height="15" fill="#ff5050"/>
<rect x="858" y="461" width="1" height="1" fill="#ff5050"/>
<rect x="857.5" y="435.5" width="2" height="25" fill="#000" stroke="#ff5050" stroke-width="1"/>
<rect x="863" y="433" width="1" height="12" fill="#54ffff"/>
<rect x="862" y="436" width="3" height="7" fill="#54ffff"/>
<rect x="868" y="437" width="1" height="6" fill="#ff5050"/>
<rect x="868" y="446" width="1" height="4" fill="#ff5050"/>
<rect x="867.5" y="443.5" width="2" height="2" fill="#000" stroke="#ff5050" stroke-width="1"/>
<rect x="873" y="442" width="1" height="15" fill="#54ffff"/>
<rect x="872" y="443" width="3" height="12" fill="#54ffff"/>
<rect x="878" y="430" width="1" height="2" fill="#ff5050"/>
<rect x="878" y="453" width="1" height="2" fill="#ff5050"/>
<rect x="877.5" y="432.5" width="2" height="19" fill="#000" stroke="#ff5050" stroke-width="1"/>
<rect x="882" y="405" width="1" height="7" fill="#ff5050"/>
<rect x="882" y="436" width="1" height="2" fill="#ff5050"/>
<rect x="881.5" y="412.5" width="2" height="23" fill="#000" stroke="#ff5050" stroke-width="1"/>
<rect x="887" y="407" width="1" height="1" fill="#ff5050"/>
<rect x="887" y="421" width="1" height="1" fill="#ff5050"/>
<rect x="886.5" y="408.5" width="2" height="12" fill="#000" stroke="#ff5050" stroke-width="1"/>
<rect x="892" y="363" width="1" height="9" fill="#ff5050"/>
<rect x="892" y="407" width="1" height="5" fill="#ff5050"/>
<rect x="891.5" y="372.5" width="2" height="34" fill="#000" stroke="#ff5050" stroke-width="1"/>
<rect x="897" y="376" width="1" height="12" fill="#54ffff"/>
<rect x="896" y="377" width="3" height="10" fill="#54ffff"/>
<rect x="902" y="391" width="1" height="17" fill="#54ffff"/>
<rect x="901" y="392" width="3" height="14" fill="#54ffff"/>
<rect x="907" y="364" width="1" height="17" fill="#ff5050"/>
<rect x="907" y="402" width="1" height="1" fill="#ff5050"/>
<rect x="906.5" y="381.5" width="2" height="20" fill="#000" stroke="#ff5050" stroke-width="1"/>
<rect x="912" y="359" width="1" height="12" fill="#ff5050"/>
<rect x="912" y="385" width="1" height="1" fill="#ff5050"/>
<rect x="911.5" y="371.5" width="2" height="13" fill="#000" stroke="#ff5050" stroke-width="1"/>
<rect x="916" y="365" width="1" height="9" fill="#ff5050"/>
<rect x="916" y="378" width="1" height="6" fill="#ff5050"/>
<rect x="915.5" y="375.5" width="2" height="2" fill="#000" stroke="#ff5050" stroke-width="1"/>
<rect x="921" y="363" width="1" height="1" fill="#ff5050"/>
<rect x="921" y="382" width="1" height="4" fill="#ff5050"/>
<rect x="920.5" y="364.5" width="2" height="18" fill="#000" stroke="#ff5050" stroke-width="1"/>
<rect x="926" y="348" width="1" height="39" fill="#54ffff"/>
<rect x="925" y="366" width="3" height="10" fill="#54ffff"/>
<rect x="931" y="364" width="1" height="24" fill="#54ffff"/>
<rect x="930" y="372" width="3" height="12" fill="#54ffff"/>
<rect x="936" y="364" width="1" height="34" fill="#54ffff"/>
<rect x="935" y="375" width="3" height="21" fill="#54ffff"/>
<rect x="941" y="392" width="1" height="22" fill="#54ffff"/>
<rect x="940" y="399" width="3" height="10" fill="#54ffff"/>
<rect x="946" y="399" width="1" height="24" fill="#54ffff"/>
<rect x="945" y="405" width="3" height="15" fill="#54ffff"/>
<rect x="950" y="410" width="1" height="14" fill="#54ffff"/>
<rect x="949" y="411" width="3" height="11" fill="#54ffff"/>
<rect x="955" y="403" width="1" height="7" fill="#ff5050"/>
<rect x="955" y="423" width="1" height="2" fill="#ff5050"/>
<rect x="954.5" y="410.5" width="2" height="13" fill="#000" stroke="#ff5050" stroke-width="1"/>
<rect x="960" y="391" width="1" height="2" fill="#ff5050"/>
<rect x="960" y="405" width="1" height="5" fill="#ff5050"/>
<rect x="959.5" y="393.5" width="2" height="11" fill="#000" stroke="#ff5050" stroke-width="1"/>
<rect x="965" y="382" width="1" height="6" fill="#ff5050"/>
<rect x="965" y="390" width="1" height="7" fill="#ff5050"/>
<rect x="964.5" y="387.5" width="2" height="2" fill="#000" stroke="#ff5050" stroke-width="1"/>
<rect x="970" y="385" width="1" height="23" fill="#54ffff"/>
<rect x="969" y="394" width="3" height="11" fill="#54ffff"/>
<rect x="975" y="396" width="1" height="2" fill="#ff5050"/>
<rect x="975" y="407" width="1" height="4" fill="#ff5050"/>
<rect x="974.5" y="399.5" width="2" height="8" fill="#000" stroke="#ff5050" stroke-width="1"/>
<rect x="980" y="357" width="1" height="6" fill="#ff5050"/>
<rect x="980" y="396" width="1" height="1" fill="#ff5050"/>
<rect x="979.5" y="363.5" width="2" height="32" fill="#000" stroke="#ff5050" stroke-width="1"/>
<rect x="984" y="353" width="1" height="1" fill="#ff5050"/>
<rect x="984" y="360" width="1" height="6" fill="#ff5050"/>
<rect x="983.5" y="354.5" width="2" height="4" fill="#000" stroke="#ff5050" stroke-width="1"/>
<rect x="989" y="350" width="1" height="14" fill="#54ffff"/>
<rect x="988" y="356" width="3" height="3" fill="#54ffff"/>
<rect x="994" y="352" width="1" height="2" fill="#ff5050"/>
<rect x="994" y="358" width="1" height="6" fill="#ff5050"/>
<rect x="993.5" y="354.5" width="2" height="2" fill="#000" stroke="#ff5050" stroke-width="1"/>
<rect x="999" y="348" width="1" height="16" fill="#54ffff"/>
<rect x="998" y="353" width="3" height="4" fill="#54ffff"/>
<rect x="1004" y="357" width="1" height="14" fill="#54ffff"/>
<rect x="1003" y="361" width="3" height="7" fill="#54ffff"/>
<rect x="1009" y="314" width="1" height="10" fill="#ff5050"/>
<rect x="1009" y="369" width="1" height="2" fill="#ff5050"/>
<rect x="1008.5" y="325.5" width="2" height="43" fill="#000" stroke="#ff5050" stroke-width="1"/>
<rect x="1013" y="297" width="1" height="16" fill="#ff5050"/>
<rect x="1013" y="328" width="1" height="6" fill="#ff5050"/>
<rect x="1012.5" y="313.5" width="2" height="14" fill="#000" stroke="#ff5050" stroke-width="1"/>
<rect x="1018" y="301" width="1" height="9" fill="#ff5050"/>
<rect x="1018" y="318" width="1" height="6" fill="#ff5050"/>
<rect x="1017.5" y="310.5" width="2" height="7" fill="#000" stroke="#ff5050" stroke-width="1"/>
<rect x="1023" y="284" width="1" height="6" fill="#ff5050"/>
<rect x="1023" y="309" width="1" height="1" fill="#ff5050"/>
<rect x="1022.5" y="290.5" width="2" height="18" fill="#000" stroke="#ff5050" stroke-width="1"/>
<rect x="1028" y="280" width="1" height="29" fill="#54ffff"/>
<rect x="1027" y="294" width="3" height="14" fill="#54ffff"/>
<rect x="1033" y="309" width="1" height="17" fill="#54ffff"/>
<rect x="1032" y="310" width="3" height="7" fill="#54ffff"/>
<rect x="1038" y="311" width="1" height="19" fill="#54ffff"/>
<rect x="1037" y="315" width="3" height="9" fill="#54ffff"/>
<rect x="1043" y="294" width="1" height="11" fill="#ff5050"/>
<rect x="1043" y="322" width="1" height="6" fill="#ff5050"/>
<rect x="1042.5" y="305.5" width="2" height="16" fill="#000" stroke="#ff5050" stroke-width="1"/>
<rect x="1047" y="293" width="1" height="16" fill="#54ffff"/>
<rect x="1046" y="296" width="3" height="7" fill="#54ffff"/>
<rect x="1052" y="302" width="1" height="17" fill="#54ffff"/>
<rect x="1051" y="307" width="3" height="2" fill="#54ffff"/>
<rect x="1057" y="299" width="1" height="23" fill="#54ffff"/>
<rect x="1056" y="312" width="3" height="6" fill="#54ffff"/>
<rect x="1062" y="286" width="1" height="28" fill="#54ffff"/>
<rect x="1061" y="310" width="3" height="4" fill="#54ffff"/>
<rect x="1067" y="278" width="1" height="6" fill="#ff5050"/>
<rect x="1067" y="305" width="1" height="12" fill="#ff5050"/>
<rect x="1066.5" y="284.5" width="2" height="20" fill="#000" stroke="#ff5050" stroke-width="1"/>
<rect x="1072" y="237" width="1" height="22" fill="#ff5050"/>
<rect x="1072" y="285" width="1" height="2" fill="#ff5050"/>
<rect x="1071.5" y="260.5" width="2" height="24" fill="#000" stroke="#ff5050" stroke-width="1"/>
<rect x="1077" y="238" width="1" height="7" fill="#ff5050"/>
<rect x="1077" y="260" width="1" height="5" fill="#ff5050"/>
<rect x="1076.5" y="246.5" width="2" height="13" fill="#000" stroke="#ff5050" stroke-width="1"/>
<rect x="1081" y="144" width="1" height="36" fill="#ff5050"/>
<rect x="1081" y="247" width="1" height="2" fill="#ff5050"/>
<rect x="1080.5" y="180.5" width="2" height="66" fill="#000" stroke="#ff5050" stroke-width="1"/>
<rect x="1086" y="142" width="1" height="62" fill="#54ffff"/>
<rect x="1085" y="186" width="3" height="6" fill="#54ffff"/>
<rect x="1091" y="155" width="1" height="32" fill="#ff5050"/>
<rect x="1091" y="190" width="1" height="16" fill="#ff5050"/>
<rect x="1090.5" y="187.5" width="2" height="1" fill="#000" stroke="#ff5050" stroke-width="1"/>
<rect x="1096" y="179" width="1" height="31" fill="#54ffff"/>
<rect x="1095" y="191" width="3" height="10" fill="#54ffff"/>
<rect x="1101" y="207" width="1" height="2" fill="#ff5050"/>
<rect x="1101" y="212" width="1" height="34" fill="#ff5050"/>
<rect x="1100.5" y="210.5" width="2" height="1" fill="#000" stroke="#ff5050" stroke-width="1"/>
<rect x="1106" y="196" width="1" height="16" fill="#54ffff"/>
<rect x="1105" y="197" width="3" height="9" fill="#54ffff"/>
<rect x="1111" y="202" width="1" height="15" fill="#54ffff"/>
<rect x="1110" y="204" width="3" height="10" fill="#54ffff"/>
<rect x="1115" y="213" width="1" height="29" fill="#54ffff"/>
<rect x="1114" y="215" width="3" height="14" fill="#54ffff"/>
<rect x="1120" y="218" width="1" height="2" fill="#ff5050"/>
<rect x="1120" y="235" width="1" height="2" fill="#ff5050"/>
<rect x="1119.5" y="221.5" width="2" height="13" fill="#000" stroke="#ff5050" stroke-width="1"/>
<rect x="1125" y="201" width="1" height="1" fill="#ff5050"/>
<rect x="1125" y="220" width="1" height="4" fill="#ff5050"/>
<rect x="1124.5" y="202.5" width="2" height="16" fill="#000" stroke="#ff5050" stroke-width="1"/>
<rect x="1130" y="180" width="1" height="29" fill="#54ffff"/>
<rect x="1129" y="194" width="3" height="7" fill="#54ffff"/>
<rect x="1135" y="159" width="1" height="17" fill="#ff5050"/>
<rect x="1135" y="195" width="1" height="20" fill="#ff5050"/>
<rect x="1134.5" y="176.5" width="2" height="18" fill="#000" stroke="#ff5050" stroke-width="1"/>
<rect x="1140" y="159" width="1" height="26" fill="#54ffff"/>
<rect x="1139" y="161" width="3" height="16" fill="#54ffff"/>
<rect x="1145" y="162" width="1" height="4" fill="#ff5050"/>
<rect x="1145" y="182" width="1" height="5" fill="#ff5050"/>
<rect x="1144.5" y="166.5" width="2" height="15" fill="#000" stroke="#ff5050" stroke-width="1"/>
<rect x="1149" y="166" width="1" height="29" fill="#54ffff"/>
<rect x="1148" y="170" width="3" height="2" fill="#54ffff"/>
<rect x="1154" y="150" width="1" height="52" fill="#54ffff"/>
<rect x="1153" y="185" width="3" height="16" fill="#54ffff"/>
<rect x="1159" y="200" width="1" height="29" fill="#54ffff"/>
<rect x="1158" y="206" width="3" height="4" fill="#54ffff"/>
<rect x="1164" y="199" width="1" height="5" fill="#ff5050"/>
<rect x="1164" y="206" width="1" height="5" fill="#ff5050"/>
<rect x="1163.5" y="204.5" width="2" height="1" fill="#000" stroke="#ff5050" stroke-width="1"/>
<rect x="1169" y="199" width="1" height="15" fill="#54ffff"/>
<rect x="1168" y="201" width="3" height="7" fill="#54ffff"/>
<rect x="1174" y="180" width="1" height="1" fill="#ff5050"/>
<rect x="1174" y="209" width="1" height="2" fill="#ff5050"/>
<rect x="1173.5" y="181.5" width="2" height="26" fill="#000" stroke="#ff5050" stroke-width="1"/>
<rect x="1178" y="181" width="1" height="36" fill="#54ffff"/>
<rect x="1177" y="187" width="3" height="27" fill="#54ffff"/>
<rect x="1183" y="211" width="1" height="27" fill="#54ffff"/>
<rect x="1182" y="212" width="3" height="25" fill="#54ffff"/>
<rect x="1188" y="230" width="1" height="41" fill="#54ffff"/>
<rect x="1187" y="237" width="3" height="2" fill="#54ffff"/>
<rect x="1193" y="232" width="1" height="10" fill="#ff5050"/>
<rect x="1193" y="250" width="1" height="6" fill="#ff5050"/>
<rect x="1192.5" y="242.5" width="2" height="6" fill="#000" stroke="#ff5050" stroke-width="1"/>
<rect x="1198" y="210" width="1" height="14" fill="#ff5050"/>
<rect x="1198" y="236" width="1" height="9" fill="#ff5050"/>
<rect x="1197.5" y="223.5" width="2" height="11" fill="#000" stroke="#ff5050" stroke-width="1"/>
<rect x="1203" y="196" width="1" height="12" fill="#ff5050"/>
<rect x="1203" y="223" width="1" height="1" fill="#ff5050"/>
<rect x="1202.5" y="209.5" width="2" height="14" fill="#000" stroke="#ff5050" stroke-width="1"/>
<rect x="1208" y="185" width="1" height="32" fill="#54ffff"/>
<rect x="1207" y="209" width="3" height="2" fill="#54ffff"/>
<rect x="1212" y="206" width="1" height="60" fill="#54ffff"/>
<rect x="1211" y="210" width="3" height="46" fill="#54ffff"/>
<rect x="1217" y="202" width="1" height="2" fill="#ff5050"/>
<rect x="1217" y="247" width="1" height="12" fill="#ff5050"/>
<rect x="1216.5" y="205.5" width="2" height="41" fill="#000" stroke="#ff5050" stroke-width="1"/>
<rect x="1222" y="178" width="1" height="20" fill="#ff5050"/>
<rect x="1222" y="204" width="1" height="6" fill="#ff5050"/>
<rect x="1221.5" y="198.5" width="2" height="5" fill="#000" stroke="#ff5050" stroke-width="1"/>
<rect x="1227" y="194" width="1" height="25" fill="#54ffff"/>
<rect x="1226" y="200" width="3" height="15" fill="#54ffff"/>
<rect x="1232" y="193" width="1" height="30" fill="#54ffff"/>
<rect x="1231" y="217" width="3" height="5" fill="#54ffff"/>
<rect x="1237" y="267" width="1" height="1" fill="#ff5050"/>
<rect x="1237" y="290" width="1" height="45" fill="#ff5050"/>
<rect x="1236.5" y="269.5" width="2" height="20" fill="#000" stroke="#ff5050" stroke-width="1"/>
<rect x="1242" y="257" width="1" height="31" fill="#54ffff"/>
<rect x="1241" y="269" width="3" height="4" fill="#54ffff"/>
<rect x="1246" y="255" width="1" height="7" fill="#ff5050"/>
<rect x="1246" y="271" width="1" height="4" fill="#ff5050"/>
<rect x="1245.5" y="262.5" width="2" height="8" fill="#000" stroke="#ff5050" stroke-width="1"/>
<rect x="1251" y="257" width="1" height="22" fill="#54ffff"/>
<rect x="1250" y="259" width="3" height="15" fill="#54ffff"/>
<rect x="1256" y="271" width="1" height="14" fill="#54ffff"/>
<rect x="1255" y="274" width="3" height="7" fill="#54ffff"/>
<rect x="1261" y="269" width="1" height="27" fill="#54ffff"/>
<rect x="1260" y="277" width="3" height="15" fill="#54ffff"/>
<rect x="1266" y="274" width="1" height="31" fill="#54ffff"/>
<rect x="1265" y="290" width="3" height="9" fill="#54ffff"/>
<rect x="1271" y="287" width="1" height="16" fill="#54ffff"/>
<rect x="1270" y="291" width="3" height="4" fill="#54ffff"/>
<rect x="1276" y="294" width="1" height="30" fill="#54ffff"/>
<rect x="1275" y="295" width="3" height="15" fill="#54ffff"/>
<rect x="1280" y="268" width="1" height="4" fill="#ff5050"/>
<rect x="1280" y="309" width="1" height="1" fill="#ff5050"/>
<rect x="1279.5" y="272.5" width="2" height="36" fill="#000" stroke="#ff5050" stroke-width="1"/>
<rect x="1285" y="256" width="1" height="21" fill="#54ffff"/>
<rect x="1284" y="272" width="3" height="4" fill="#54ffff"/>
<rect x="1290" y="272" width="1" height="27" fill="#54ffff"/>
<rect x="1289" y="282" width="3" height="10" fill="#54ffff"/>
<rect x="1295" y="294" width="1" height="24" fill="#54ffff"/>
<rect x="1294" y="295" width="3" height="5" fill="#54ffff"/>
<rect x="1300" y="296" width="1" height="16" fill="#54ffff"/>
<rect x="1299" y="299" width="3" height="11" fill="#54ffff"/>
<rect x="1305" y="300" width="1" height="26" fill="#54ffff"/>
<rect x="1304" y="306" width="3" height="14" fill="#54ffff"/>
<rect x="1310" y="307" width="1" height="31" fill="#54ffff"/>
<rect x="1309" y="321" width="3" height="16" fill="#54ffff"/>
<rect x="1314" y="341" width="1" height="10" fill="#ff5050"/>
<rect x="1313.5" y="351.5" width="2" height="10" fill="#000" stroke="#ff5050" stroke-width="1"/>
<rect x="1319" y="336" width="1" height="24" fill="#54ffff"/>
<rect x="1318" y="342" width="3" height="17" fill="#54ffff"/>
<rect x="1324" y="342" width="1" height="4" fill="#ff5050"/>
<rect x="1324" y="349" width="1" height="12" fill="#ff5050"/>
<rect x="1323.5" y="346.5" width="2" height="1" fill="#000" stroke="#ff5050" stroke-width="1"/>
<rect x="1329" y="337" width="1" height="17" fill="#54ffff"/>
<rect x="1328" y="342" width="3" height="9" fill="#54ffff"/>
<rect x="1334" y="337" width="1" height="25" fill="#54ffff"/>
<rect x="1333" y="349" width="3" height="12" fill="#54ffff"/>
<rect x="1339" y="347" width="1" height="16" fill="#54ffff"/>
<rect x="1338" y="355" width="3" height="7" fill="#54ffff"/>
<rect x="1343" y="352" width="1" height="10" fill="#54ffff"/>
<rect x="1342" y="353" width="3" height="6" fill="#54ffff"/>
<rect x="1348" y="346" width="1" height="20" fill="#54ffff"/>
<rect x="1347" y="360" width="3" height="5" fill="#54ffff"/>
<rect x="1353" y="363" width="1" height="18" fill="#54ffff"/>
<rect x="1352" y="366" width="3" height="7" fill="#54ffff"/>
<rect x="1358" y="363" width="1" height="11" fill="#54ffff"/>
<rect x="1357" y="371" width="3" height="2" fill="#54ffff"/>
<rect x="1363" y="355" width="1" height="9" fill="#ff5050"/>
<rect x="1363" y="365" width="1" height="2" fill="#ff5050"/>
<rect x="1362.5" y="363.5" width="2" height="1" fill="#000" stroke="#ff5050" stroke-width="1"/>
<rect x="1368" y="360" width="1" height="1" fill="#ff5050"/>
<rect x="1368" y="367" width="1" height="6" fill="#ff5050"/>
<rect x="1367.5" y="361.5" width="2" height="5" fill="#000" stroke="#ff5050" stroke-width="1"/>
<rect x="1373" y="287" width="1" height="3" fill="#ff5050"/>
<rect x="1373" y="349" width="1" height="1" fill="#ff5050"/>
<rect x="1372.5" y="290.5" width="2" height="58" fill="#000" stroke="#ff5050" stroke-width="1"/>
<rect x="1377" y="282" width="1" height="19" fill="#54ffff"/>
<rect x="1376" y="293" width="3" height="3" fill="#54ffff"/>
<rect x="1382" y="279" width="1" height="7" fill="#ff5050"/>
<rect x="1382" y="296" width="1" height="12" fill="#ff5050"/>
<rect x="1381.5" y="286.5" width="2" height="9" fill="#000" stroke="#ff5050" stroke-width="1"/>
<rect x="1387" y="264" width="1" height="16" fill="#ff5050"/>
<rect x="1387" y="286" width="1" height="7" fill="#ff5050"/>
<rect x="1386.5" y="279.5" width="2" height="6" fill="#000" stroke="#ff5050" stroke-width="1"/>
<rect x="1392" y="276" width="1" height="21" fill="#54ffff"/>
<rect x="1391" y="287" width="3" height="4" fill="#54ffff"/>
<rect x="1397" y="291" width="1" height="20" fill="#54ffff"/>
<rect x="1396" y="297" width="3" height="4" fill="#54ffff"/>
<rect x="1402" y="278" width="1" height="24" fill="#54ffff"/>
<rect x="1401" y="296" width="3" height="4" fill="#54ffff"/>
<rect x="1407" y="296" width="1" height="12" fill="#54ffff"/>
<rect x="1406" y="299" width="3" height="6" fill="#54ffff"/>
<rect x="1411" y="281" width="1" height="4" fill="#ff5050"/>
<rect x="1411" y="306" width="1" height="4" fill="#ff5050"/>
<rect x="1410.5" y="285.5" width="2" height="20" fill="#000" stroke="#ff5050" stroke-width="1"/>
<rect x="1416" y="284" width="1" height="25" fill="#54ffff"/>
<rect x="1415" y="285" width="3" height="14" fill="#54ffff"/>
<rect x="1421" y="295" width="1" height="16" fill="#54ffff"/>
<rect x="1420" y="297" width="3" height="12" fill="#54ffff"/>
<rect x="1426" y="284" width="1" height="10" fill="#ff5050"/>
<rect x="1426" y="310" width="1" height="1" fill="#ff5050"/>
<rect x="1425.5" y="294.5" width="2" height="15" fill="#000" stroke="#ff5050" stroke-width="1"/>
<rect x="1431" y="290" width="1" height="19" fill="#54ffff"/>
<rect x="1430" y="299" width="3" height="2" fill="#54ffff"/>
<rect x="1436" y="307" width="1" height="39" fill="#54ffff"/>
<rect x="1435" y="310" width="3" height="26" fill="#54ffff"/>
<rect x="1441" y="336" width="1" height="25" fill="#54ffff"/>
<rect x="1440" y="341" width="3" height="19" fill="#54ffff"/>
<rect x="1445" y="352" width="1" height="25" fill="#54ffff"/>
<rect x="1444" y="357" width="3" height="17" fill="#54ffff"/>
<rect x="1450" y="368" width="1" height="29" fill="#54ffff"/>
<rect x="1449" y="370" width="3" height="26" fill="#54ffff"/>
<rect x="1455" y="391" width="1" height="27" fill="#54ffff"/>
<rect x="1454" y="400" width="3" height="7" fill="#54ffff"/>
<rect x="1460" y="387" width="1" height="7" fill="#ff5050"/>
<rect x="1460" y="403" width="1" height="2" fill="#ff5050"/>
<rect x="1459.5" y="395.5" width="2" height="8" fill="#000" stroke="#ff5050" stroke-width="1"/>
<rect x="1465" y="385" width="1" height="5" fill="#ff5050"/>
<rect x="1465" y="392" width="1" height="4" fill="#ff5050"/>
<rect x="1464.5" y="390.5" width="2" height="1" fill="#000" stroke="#ff5050" stroke-width="1"/>
<rect x="1470" y="378" width="1" height="12" fill="#ff5050"/>
<rect x="1470" y="393" width="1" height="4" fill="#ff5050"/>
<rect x="1469.5" y="390.5" width="2" height="1" fill="#000" stroke="#ff5050" stroke-width="1"/>
<rect x="1475" y="380" width="1" height="9" fill="#ff5050"/>
<rect x="1475" y="391" width="1" height="2" fill="#ff5050"/>
<rect x="1474.5" y="388.5" width="2" height="1" fill="#000" stroke="#ff5050" stroke-width="1"/>
<rect x="1479" y="385" width="1" height="9" fill="#54ffff"/>
<rect x="1478" y="387" width="3" height="4" fill="#54ffff"/>
<rect x="1484" y="383" width="1" height="14" fill="#54ffff"/>
<rect x="1483" y="391" width="3" height="5" fill="#54ffff"/>
<rect x="1489" y="396" width="1" height="23" fill="#54ffff"/>
<rect x="1488" y="397" width="3" height="20" fill="#54ffff"/>
<rect x="1494" y="413" width="1" height="12" fill="#54ffff"/>
<rect x="1493" y="417" width="3" height="7" fill="#54ffff"/>
<rect x="1499" y="415" width="1" height="2" fill="#ff5050"/>
<rect x="1499" y="422" width="1" height="6" fill="#ff5050"/>
<rect x="1498.5" y="417.5" width="2" height="4" fill="#000" stroke="#ff5050" stroke-width="1"/>
<rect x="1504" y="408" width="1" height="1" fill="#ff5050"/>
<rect x="1504" y="425" width="1" height="2" fill="#ff5050"/>
<rect x="1503.5" y="410.5" width="2" height="14" fill="#000" stroke="#ff5050" stroke-width="1"/>
<rect x="1508" y="404" width="1" height="10" fill="#54ffff"/>
<rect x="1507" y="407" width="3" height="5" fill="#54ffff"/>
<rect x="1513" y="397" width="1" height="9" fill="#ff5050"/>
<rect x="1513" y="410" width="1" height="4" fill="#ff5050"/>
<rect x="1512.5" y="406.5" width="2" height="3" fill="#000" stroke="#ff5050" stroke-width="1"/>
<rect x="1518" y="404" width="1" height="1" fill="#ff5050"/>
<rect x="1518" y="420" width="1" height="1" fill="#ff5050"/>
<rect x="1517.5" y="405.5" width="2" height="13" fill="#000" stroke="#ff5050" stroke-width="1"/>
<rect x="1523" y="395" width="1" height="20" fill="#54ffff"/>
<rect x="1522" y="403" width="3" height="10" fill="#54ffff"/>
<rect x="1528" y="397" width="1" height="2" fill="#ff5050"/>
<rect x="1528" y="410" width="1" height="6" fill="#ff5050"/>
<rect x="1527.5" y="400.5" width="2" height="9" fill="#000" stroke="#ff5050" stroke-width="1"/>
<rect x="1533" y="400" width="1" height="14" fill="#54ffff"/>
<rect x="1532" y="406" width="3" height="5" fill="#54ffff"/>
<rect x="1538" y="407" width="1" height="12" fill="#54ffff"/>
<rect x="1537" y="410" width="3" height="2" fill="#54ffff"/>
<rect x="1542" y="400" width="1" height="5" fill="#ff5050"/>
<rect x="1542" y="417" width="1" height="2" fill="#ff5050"/>
<rect x="1541.5" y="405.5" width="2" height="11" fill="#000" stroke="#ff5050" stroke-width="1"/>
<rect x="1547" y="392" width="1" height="7" fill="#ff5050"/>
<rect x="1547" y="403" width="1" height="3" fill="#ff5050"/>
<rect x="1546.5" y="400.5" width="2" height="2" fill="#000" stroke="#ff5050" stroke-width="1"/>
<rect x="1552" y="376" width="1" height="2" fill="#ff5050"/>
<rect x="1552" y="398" width="1" height="1" fill="#ff5050"/>
<rect x="1551.5" y="378.5" width="2" height="19" fill="#000" stroke="#ff5050" stroke-width="1"/>
<rect x="1557" y="378" width="1" height="14" fill="#54ffff"/>
<rect x="1556" y="379" width="3" height="10" fill="#54ffff"/>
<rect x="1562" y="383" width="1" height="14" fill="#54ffff"/>
<rect x="1561" y="386" width="3" height="6" fill="#54ffff"/>
<rect x="1567" y="358" width="1" height="2" fill="#ff5050"/>
<rect x="1567" y="396" width="1" height="1" fill="#ff5050"/>
<rect x="1566.5" y="361.5" width="2" height="34" fill="#000" stroke="#ff5050" stroke-width="1"/>
<rect x="1572" y="341" width="1" height="4" fill="#ff5050"/>
<rect x="1572" y="365" width="1" height="1" fill="#ff5050"/>
<rect x="1571.5" y="345.5" width="2" height="19" fill="#000" stroke="#ff5050" stroke-width="1"/>
<rect x="1576" y="337" width="1" height="18" fill="#54ffff"/>
<rect x="1575" y="341" width="3" height="2" fill="#54ffff"/>
<rect x="1581" y="322" width="1" height="10" fill="#ff5050"/>
<rect x="1581" y="346" width="1" height="2" fill="#ff5050"/>
<rect x="1580.5" y="332.5" width="2" height="13" fill="#000" stroke="#ff5050" stroke-width="1"/>
<rect x="1586" y="320" width="1" height="4" fill="#ff5050"/>
<rect x="1586" y="334" width="1" height="2" fill="#ff5050"/>
<rect x="1585.5" y="324.5" width="2" height="8" fill="#000" stroke="#ff5050" stroke-width="1"/>
<rect x="1591" y="314" width="1" height="9" fill="#ff5050"/>
<rect x="1591" y="326" width="1" height="4" fill="#ff5050"/>
<rect x="1590.5" y="323.5" width="2" height="1" fill="#000" stroke="#ff5050" stroke-width="1"/>
<rect x="1596" y="285" width="1" height="9" fill="#ff5050"/>
<rect x="1596" y="327" width="1" height="2" fill="#ff5050"/>
<rect x="1595.5" y="294.5" width="2" height="32" fill="#000" stroke="#ff5050" stroke-width="1"/>
<rect x="1601" y="290" width="1" height="17" fill="#54ffff"/>
<rect x="1600" y="293" width="3" height="4" fill="#54ffff"/>
<rect x="1606" y="274" width="1" height="6" fill="#ff5050"/>
<rect x="1606" y="297" width="1" height="2" fill="#ff5050"/>
<rect x="1605.5" y="280.5" width="2" height="16" fill="#000" stroke="#ff5050" stroke-width="1"/>
</g>
</svg>
<svg width="1612" height="842" viewBox="0 0 1612 842">
<g shape-rendering="crispEdges">
<rect x="-2" y="759" width="2" height="28" fill="#007400"/>
<rect x="3" y="759" width="2" height="22" fill="#007400"/>
<rect x="8" y="760" width="2" height="30" fill="#007400"/>
<rect x="13" y="761" width="2" height="9" fill="#007400"/>
<rect x="13" y="770" width="2" height="11" fill="#00e600"/>
<rect x="27" y="763" width="2" height="20" fill="#007400"/>
<rect x="32" y="763" width="2" height="9" fill="#00e600"/>
<rect x="37" y="764" width="2" height="6" fill="#00e600"/>
<rect x="42" y="764" width="2" height="1" fill="#ffff00"/>
<rect x="47" y="765" width="2" height="15" fill="#007400"/>
<rect x="52" y="765" width="2" height="11" fill="#007400"/>
<rect x="56" y="765" width="2" height="13" fill="#007400"/>
<rect x="61" y="766" width="2" height="11" fill="#007400"/>
<rect x="66" y="766" width="2" height="12" fill="#007400"/>
<rect x="71" y="767" width="2" height="11" fill="#007400"/>
<rect x="76" y="767" width="2" height="5" fill="#007400"/>
<rect x="90" y="768" width="2" height="3" fill="#007400"/>
<rect x="95" y="761" width="2" height="2" fill="#f01e42"/>
<rect x="100" y="750" width="2" height="12" fill="#f01e42"/>
<rect x="105" y="729" width="2" height="33" fill="#f01e42"/>
<rect x="110" y="686" width="2" height="73" fill="#f01e42"/>
<rect x="115" y="609" width="2" height="145" fill="#f01e42"/>
<rect x="120" y="534" width="2" height="214" fill="#f01e42"/>
<rect x="124" y="626" width="2" height="117" fill="#f01e42"/>
<rect x="129" y="634" width="2" height="106" fill="#f01e42"/>
<rect x="134" y="666" width="2" height="39" fill="#ffff00"/>
<rect x="134" y="705" width="2" height="32" fill="#ff8000"/>
<rect x="139" y="660" width="2" height="41" fill="#ffff00"/>
<rect x="139" y="701" width="2" height="33" fill="#ff8000"/>
<rect x="144" y="679" width="2" height="32" fill="#00e600"/>
<rect x="144" y="711" width="2" height="21" fill="#ffff00"/>
<rect x="149" y="690" width="2" height="24" fill="#00e600"/>
<rect x="149" y="714" width="2" height="16" fill="#ffff00"/>
<rect x="153" y="693" width="2" height="21" fill="#00e600"/>
<rect x="153" y="714" width="2" height="14" fill="#ffff00"/>
<rect x="158" y="656" width="2" height="69" fill="#f01e42"/>
<rect x="163" y="642" width="2" height="80" fill="#f01e42"/>
<rect x="168" y="626" width="2" height="94" fill="#f01e42"/>
<rect x="173" y="631" width="2" height="86" fill="#f01e42"/>
<rect x="178" y="635" width="2" height="79" fill="#f01e42"/>
<rect x="183" y="601" width="2" height="109" fill="#f01e42"/>
<rect x="187" y="594" width="2" height="113" fill="#f01e42"/>
<rect x="192" y="618" width="2" height="48" fill="#ffff00"/>
<rect x="192" y="666" width="2" height="39" fill="#ff8000"/>
<rect x="197" y="662" width="2" height="40" fill="#00e600"/>
<rect x="202" y="667" width="2" height="34" fill="#00e600"/>
<rect x="207" y="670" width="2" height="31" fill="#00e600"/>
<rect x="212" y="661" width="2" height="38" fill="#00e600"/>
<rect x="217" y="626" width="2" height="71" fill="#f01e42"/>
<rect x="221" y="634" width="2" height="61" fill="#f01e42"/>
<rect x="226" y="629" width="2" height="63" fill="#f01e42"/>
<rect x="231" y="641" width="2" height="29" fill="#00e600"/>
<rect x="231" y="670" width="2" height="21" fill="#ffff00"/>
<rect x="236" y="622" width="2" height="66" fill="#f01e42"/>
<rect x="241" y="625" width="2" height="61" fill="#f01e42"/>
<rect x="246" y="629" width="2" height="56" fill="#f01e42"/>
<rect x="251" y="649" width="2" height="35" fill="#00e600"/>
<rect x="255" y="676" width="2" height="6" fill="#00e600"/>
<rect x="260" y="686" width="2" height="1" fill="#007400"/>
<rect x="265" y="680" width="2" height="1" fill="#f01e42"/>
<rect x="270" y="648" width="2" height="32" fill="#f01e42"/>
<rect x="275" y="650" width="2" height="30" fill="#f01e42"/>
<rect x="285" y="676" width="2" height="3" fill="#00e600"/>
<rect x="294" y="665" width="2" height="14" fill="#ffff00"/>
<rect x="299" y="671" width="2" height="7" fill="#f01e42"/>
<rect x="304" y="654" width="2" height="23" fill="#f01e42"/>
<rect x="309" y="641" width="2" height="34" fill="#f01e42"/>
<rect x="314" y="645" width="2" height="30" fill="#f01e42"/>
<rect x="318" y="659" width="2" height="16" fill="#00e600"/>
<rect x="323" y="665" width="2" height="9" fill="#00e600"/>
<rect x="328" y="638" width="2" height="35" fill="#f01e42"/>
<rect x="333" y="639" width="2" height="33" fill="#f01e42"/>
<rect x="338" y="644" width="2" height="27" fill="#f01e42"/>
<rect x="343" y="647" width="2" height="11" fill="#ffff00"/>
<rect x="343" y="659" width="2" height="11" fill="#ff8000"/>
<rect x="348" y="649" width="2" height="10" fill="#ffff00"/>
<rect x="348" y="659" width="2" height="10" fill="#ff8000"/>
<rect x="377" y="676" width="2" height="4" fill="#007400"/>
<rect x="382" y="677" width="2" height="14" fill="#007400"/>
<rect x="386" y="677" width="2" height="19" fill="#007400"/>
<rect x="391" y="678" width="2" height="29" fill="#007400"/>
<rect x="396" y="679" width="2" height="33" fill="#007400"/>
<rect x="401" y="681" width="2" height="37" fill="#007400"/>
<rect x="406" y="682" width="2" height="39" fill="#007400"/>
<rect x="411" y="684" width="2" height="41" fill="#007400"/>
<rect x="416" y="685" width="2" height="44" fill="#007400"/>
<rect x="420" y="687" width="2" height="54" fill="#007400"/>
<rect x="425" y="689" width="2" height="60" fill="#007400"/>
<rect x="430" y="691" width="2" height="65" fill="#007400"/>
<rect x="435" y="694" width="2" height="70" fill="#007400"/>
<rect x="440" y="696" width="2" height="74" fill="#007400"/>
<rect x="445" y="699" width="2" height="79" fill="#007400"/>
<rect x="450" y="701" width="2" height="70" fill="#007400"/>
<rect x="454" y="704" width="2" height="31" fill="#007400"/>
<rect x="454" y="735" width="2" height="31" fill="#00e600"/>
<rect x="459" y="706" width="2" height="63" fill="#007400"/>
<rect x="464" y="708" width="2" height="64" fill="#007400"/>
<rect x="469" y="711" width="2" height="60" fill="#007400"/>
<rect x="474" y="713" width="2" height="26" fill="#007400"/>
<rect x="474" y="740" width="2" height="26" fill="#00e600"/>
<rect x="479" y="716" width="2" height="58" fill="#007400"/>
<rect x="483" y="718" width="2" height="60" fill="#007400"/>
<rect x="488" y="720" width="2" height="62" fill="#007400"/>
<rect x="493" y="722" width="2" height="58" fill="#007400"/>
<rect x="498" y="724" width="2" height="53" fill="#007400"/>
<rect x="503" y="726" width="2" height="24" fill="#007400"/>
<rect x="503" y="750" width="2" height="24" fill="#00e600"/>
<rect x="508" y="727" width="2" height="41" fill="#007400"/>
<rect x="513" y="728" width="2" height="15" fill="#00e600"/>
<rect x="513" y="743" width="2" height="15" fill="#ffff00"/>
<rect x="517" y="729" width="2" height="4" fill="#ffff00"/>
<rect x="522" y="729" width="2" height="7" fill="#ffff00"/>
<rect x="522" y="736" width="2" height="9" fill="#ff8000"/>
<rect x="527" y="730" width="2" height="6" fill="#ffff00"/>
<rect x="527" y="736" width="2" height="7" fill="#ff8000"/>
<rect x="532" y="730" width="2" height="17" fill="#00e600"/>
<rect x="537" y="730" width="2" height="4" fill="#007400"/>
<rect x="547" y="730" width="2" height="11" fill="#00e600"/>
<rect x="551" y="730" width="2" height="5" fill="#ffff00"/>
<rect x="556" y="709" width="2" height="16" fill="#f01e42"/>
<rect x="561" y="678" width="2" height="46" fill="#f01e42"/>
<rect x="566" y="693" width="2" height="30" fill="#f01e42"/>
<rect x="571" y="713" width="2" height="8" fill="#f01e42"/>
<rect x="571" y="720" width="2" height="2" fill="#ffff00"/>
<rect x="576" y="691" width="2" height="30" fill="#f01e42"/>
<rect x="581" y="695" width="2" height="25" fill="#f01e42"/>
<rect x="585" y="716" width="2" height="3" fill="#ffff00"/>
<rect x="590" y="714" width="2" height="5" fill="#ffff00"/>
<rect x="595" y="716" width="2" height="3" fill="#ffff00"/>
<rect x="605" y="706" width="2" height="12" fill="#f01e42"/>
<rect x="634" y="705" width="2" height="13" fill="#f01e42"/>
<rect x="639" y="709" width="2" height="9" fill="#f01e42"/>
<rect x="644" y="698" width="2" height="20" fill="#f01e42"/>
<rect x="649" y="713" width="2" height="4" fill="#ffff00"/>
<rect x="658" y="722" width="2" height="5" fill="#007400"/>
<rect x="663" y="723" width="2" height="14" fill="#007400"/>
<rect x="668" y="723" width="2" height="18" fill="#007400"/>
<rect x="673" y="724" width="2" height="21" fill="#007400"/>
<rect x="678" y="724" width="2" height="7" fill="#007400"/>
<rect x="682" y="726" width="2" height="21" fill="#007400"/>
<rect x="687" y="727" width="2" height="36" fill="#007400"/>
<rect x="692" y="728" width="2" height="7" fill="#007400"/>
<rect x="692" y="735" width="2" height="7" fill="#00e600"/>
<rect x="697" y="729" width="2" height="27" fill="#007400"/>
<rect x="702" y="730" width="2" height="30" fill="#007400"/>
<rect x="707" y="733" width="2" height="66" fill="#007400"/>
<rect x="712" y="735" width="2" height="69" fill="#007400"/>
<rect x="716" y="737" width="2" height="77" fill="#007400"/>
<rect x="721" y="740" width="2" height="72" fill="#007400"/>
<rect x="726" y="742" width="2" height="68" fill="#007400"/>
<rect x="731" y="745" width="2" height="64" fill="#007400"/>
<rect x="736" y="747" width="2" height="68" fill="#007400"/>
<rect x="741" y="750" width="2" height="72" fill="#007400"/>
<rect x="746" y="752" width="2" height="68" fill="#007400"/>
<rect x="750" y="754" width="2" height="65" fill="#007400"/>
<rect x="755" y="757" width="2" height="36" fill="#007400"/>
<rect x="755" y="793" width="2" height="24" fill="#00e600"/>
<rect x="760" y="759" width="2" height="33" fill="#007400"/>
<rect x="760" y="792" width="2" height="22" fill="#00e600"/>
<rect x="765" y="761" width="2" height="10" fill="#007400"/>
<rect x="765" y="771" width="2" height="39" fill="#00e600"/>
<rect x="770" y="762" width="2" height="9" fill="#007400"/>
<rect x="770" y="771" width="2" height="36" fill="#00e600"/>
<rect x="775" y="764" width="2" height="28" fill="#007400"/>
<rect x="775" y="792" width="2" height="19" fill="#00e600"/>
<rect x="780" y="766" width="2" height="51" fill="#007400"/>
<rect x="784" y="768" width="2" height="48" fill="#007400"/>
<rect x="789" y="769" width="2" height="44" fill="#007400"/>
<rect x="794" y="771" width="2" height="9" fill="#007400"/>
<rect x="794" y="780" width="2" height="27" fill="#00e600"/>
<rect x="799" y="772" width="2" height="8" fill="#007400"/>
<rect x="799" y="780" width="2" height="23" fill="#00e600"/>
<rect x="804" y="773" width="2" height="7" fill="#007400"/>
<rect x="804" y="781" width="2" height="22" fill="#00e600"/>
<rect x="809" y="775" width="2" height="34" fill="#007400"/>
<rect x="814" y="776" width="2" height="36" fill="#007400"/>
<rect x="818" y="778" width="2" height="36" fill="#007400"/>
<rect x="823" y="779" width="2" height="38" fill="#007400"/>
<rect x="828" y="781" width="2" height="41" fill="#007400"/>
<rect x="833" y="782" width="2" height="45" fill="#007400"/>
<rect x="838" y="783" width="2" height="47" fill="#007400"/>
<rect x="843" y="785" width="2" height="15" fill="#00e600"/>
<rect x="843" y="800" width="2" height="19" fill="#ffff00"/>
<rect x="847" y="785" width="2" height="9" fill="#00e600"/>
<rect x="847" y="794" width="2" height="11" fill="#ffff00"/>
<rect x="852" y="786" width="2" height="11" fill="#00e600"/>
<rect x="852" y="798" width="2" height="11" fill="#ffff00"/>
<rect x="857" y="787" width="2" height="3" fill="#ffff00"/>
<rect x="862" y="787" width="2" height="3" fill="#ffff00"/>
<rect x="862" y="790" width="2" height="3" fill="#ff8000"/>
<rect x="867" y="787" width="2" height="4" fill="#ffff00"/>
<rect x="867" y="791" width="2" height="4" fill="#ff8000"/>
<rect x="872" y="788" width="2" height="14" fill="#00e600"/>
<rect x="881" y="777" width="2" height="6" fill="#f01e42"/>
<rect x="886" y="772" width="2" height="10" fill="#f01e42"/>
<rect x="891" y="749" width="2" height="32" fill="#f01e42"/>
<rect x="896" y="759" width="2" height="22" fill="#f01e42"/>
<rect x="901" y="771" width="2" height="8" fill="#ffff00"/>
<rect x="906" y="755" width="2" height="24" fill="#f01e42"/>
<rect x="911" y="748" width="2" height="30" fill="#f01e42"/>
<rect x="915" y="752" width="2" height="25" fill="#f01e42"/>
<rect x="920" y="743" width="2" height="34" fill="#f01e42"/>
<rect x="925" y="752" width="2" height="23" fill="#f01e42"/>
<rect x="930" y="759" width="2" height="10" fill="#ffff00"/>
<rect x="930" y="769" width="2" height="7" fill="#ff8000"/>
<rect x="935" y="766" width="2" height="8" fill="#00e600"/>
<rect x="954" y="772" width="2" height="1" fill="#ffff00"/>
<rect x="959" y="764" width="2" height="10" fill="#f01e42"/>
<rect x="964" y="760" width="2" height="13" fill="#f01e42"/>
<rect x="974" y="767" width="2" height="4" fill="#f01e42"/>
<rect x="979" y="744" width="2" height="27" fill="#f01e42"/>
<rect x="983" y="736" width="2" height="34" fill="#f01e42"/>
<rect x="988" y="739" width="2" height="30" fill="#f01e42"/>
<rect x="993" y="736" width="2" height="32" fill="#f01e42"/>
<rect x="998" y="739" width="2" height="28" fill="#f01e42"/>
<rect x="1003" y="746" width="2" height="11" fill="#ffff00"/>
<rect x="1003" y="757" width="2" height="9" fill="#ff8000"/>
<rect x="1008" y="726" width="2" height="38" fill="#f01e42"/>
<rect x="1012" y="709" width="2" height="54" fill="#f01e42"/>
<rect x="1017" y="705" width="2" height="56" fill="#f01e42"/>
<rect x="1022" y="692" width="2" height="67" fill="#f01e42"/>
<rect x="1027" y="704" width="2" height="53" fill="#f01e42"/>
<rect x="1032" y="711" width="2" height="25" fill="#ffff00"/>
<rect x="1032" y="736" width="2" height="20" fill="#ff8000"/>
<rect x="1037" y="716" width="2" height="21" fill="#ffff00"/>
<rect x="1037" y="737" width="2" height="16" fill="#ff8000"/>
<rect x="1042" y="703" width="2" height="48" fill="#f01e42"/>
<rect x="1046" y="700" width="2" height="49" fill="#f01e42"/>
<rect x="1051" y="705" width="2" height="42" fill="#f01e42"/>
<rect x="1056" y="711" width="2" height="19" fill="#00e600"/>
<rect x="1056" y="730" width="2" height="16" fill="#ffff00"/>
<rect x="1061" y="709" width="2" height="20" fill="#ffff00"/>
<rect x="1061" y="728" width="2" height="16" fill="#ff8000"/>
<rect x="1066" y="691" width="2" height="51" fill="#f01e42"/>
<rect x="1071" y="676" width="2" height="64" fill="#f01e42"/>
<rect x="1076" y="665" width="2" height="73" fill="#f01e42"/>
<rect x="1080" y="617" width="2" height="117" fill="#f01e42"/>
<rect x="1085" y="624" width="2" height="107" fill="#f01e42"/>
<rect x="1090" y="622" width="2" height="106" fill="#f01e42"/>
<rect x="1095" y="630" width="2" height="94" fill="#f01e42"/>
<rect x="1100" y="638" width="2" height="45" fill="#ffff00"/>
<rect x="1100" y="683" width="2" height="38" fill="#ff8000"/>
<rect x="1105" y="632" width="2" height="86" fill="#f01e42"/>
<rect x="1110" y="639" width="2" height="41" fill="#ffff00"/>
<rect x="1110" y="680" width="2" height="35" fill="#ff8000"/>
<rect x="1114" y="649" width="2" height="34" fill="#00e600"/>
<rect x="1114" y="683" width="2" height="30" fill="#ffff00"/>
<rect x="1119" y="648" width="2" height="34" fill="#ffff00"/>
<rect x="1119" y="681" width="2" height="29" fill="#ff8000"/>
<rect x="1124" y="634" width="2" height="74" fill="#f01e42"/>
<rect x="1129" y="630" width="2" height="75" fill="#f01e42"/>
<rect x="1134" y="615" width="2" height="87" fill="#f01e42"/>
<rect x="1139" y="614" width="2" height="85" fill="#f01e42"/>
<rect x="1144" y="608" width="2" height="89" fill="#f01e42"/>
<rect x="1148" y="611" width="2" height="82" fill="#f01e42"/>
<rect x="1153" y="628" width="2" height="36" fill="#00e600"/>
<rect x="1153" y="664" width="2" height="27" fill="#ffff00"/>
<rect x="1158" y="636" width="2" height="30" fill="#00e600"/>
<rect x="1158" y="666" width="2" height="23" fill="#ffff00"/>
<rect x="1163" y="634" width="2" height="30" fill="#00e600"/>
<rect x="1163" y="664" width="2" height="23" fill="#ffff00"/>
<rect x="1168" y="636" width="2" height="28" fill="#00e600"/>
<rect x="1168" y="664" width="2" height="21" fill="#ffff00"/>
<rect x="1173" y="618" width="2" height="65" fill="#f01e42"/>
<rect x="1177" y="646" width="2" height="35" fill="#00e600"/>
<rect x="1182" y="656" width="2" height="15" fill="#007400"/>
<rect x="1182" y="671" width="2" height="10" fill="#00e600"/>
<rect x="1187" y="658" width="2" height="13" fill="#007400"/>
<rect x="1187" y="671" width="2" height="9" fill="#00e600"/>
<rect x="1192" y="660" width="2" height="11" fill="#007400"/>
<rect x="1192" y="671" width="2" height="8" fill="#00e600"/>
<rect x="1197" y="646" width="2" height="19" fill="#00e600"/>
<rect x="1197" y="665" width="2" height="13" fill="#ffff00"/>
<rect x="1202" y="636" width="2" height="40" fill="#f01e42"/>
<rect x="1207" y="639" width="2" height="37" fill="#f01e42"/>
<rect x="1211" y="666" width="2" height="8" fill="#00e600"/>
<rect x="1216" y="635" width="2" height="38" fill="#f01e42"/>
<rect x="1221" y="630" width="2" height="43" fill="#f01e42"/>
<rect x="1226" y="650" width="2" height="22" fill="#007400"/>
<rect x="1231" y="656" width="2" height="9" fill="#007400"/>
<rect x="1231" y="666" width="2" height="6" fill="#00e600"/>
<rect x="1245" y="669" width="2" height="4" fill="#00e600"/>
<rect x="1255" y="678" width="2" height="5" fill="#007400"/>
<rect x="1260" y="678" width="2" height="10" fill="#007400"/>
<rect x="1265" y="679" width="2" height="16" fill="#007400"/>
<rect x="1270" y="679" width="2" height="14" fill="#007400"/>
<rect x="1275" y="680" width="2" height="24" fill="#007400"/>
<rect x="1289" y="681" width="2" height="7" fill="#007400"/>
<rect x="1294" y="682" width="2" height="12" fill="#007400"/>
<rect x="1299" y="683" width="2" height="17" fill="#007400"/>
<rect x="1304" y="684" width="2" height="22" fill="#007400"/>
<rect x="1309" y="685" width="2" height="34" fill="#007400"/>
<rect x="1313" y="686" width="2" height="43" fill="#007400"/>
<rect x="1318" y="688" width="2" height="49" fill="#007400"/>
<rect x="1323" y="689" width="2" height="38" fill="#007400"/>
<rect x="1328" y="691" width="2" height="41" fill="#007400"/>
<rect x="1333" y="693" width="2" height="46" fill="#007400"/>
<rect x="1338" y="694" width="2" height="40" fill="#007400"/>
<rect x="1342" y="695" width="2" height="42" fill="#007400"/>
<rect x="1347" y="697" width="2" height="45" fill="#007400"/>
<rect x="1352" y="699" width="2" height="47" fill="#007400"/>
<rect x="1357" y="700" width="2" height="47" fill="#007400"/>
<rect x="1362" y="701" width="2" height="19" fill="#007400"/>
<rect x="1362" y="720" width="2" height="19" fill="#00e600"/>
<rect x="1367" y="702" width="2" height="4" fill="#007400"/>
<rect x="1367" y="706" width="2" height="32" fill="#00e600"/>
<rect x="1376" y="694" width="2" height="4" fill="#f01e42"/>
<rect x="1381" y="691" width="2" height="7" fill="#f01e42"/>
<rect x="1386" y="685" width="2" height="13" fill="#f01e42"/>
<rect x="1391" y="691" width="2" height="6" fill="#ffff00"/>
<rect x="1410" y="688" width="2" height="9" fill="#ff8000"/>
<rect x="1420" y="701" width="2" height="2" fill="#00e600"/>
<rect x="1425" y="695" width="2" height="2" fill="#f01e42"/>
<rect x="1430" y="702" width="2" height="2" fill="#007400"/>
<rect x="1435" y="703" width="2" height="13" fill="#007400"/>
<rect x="1440" y="704" width="2" height="29" fill="#007400"/>
<rect x="1444" y="706" width="2" height="43" fill="#007400"/>
<rect x="1449" y="707" width="2" height="54" fill="#007400"/>
<rect x="1454" y="709" width="2" height="61" fill="#007400"/>
<rect x="1459" y="711" width="2" height="52" fill="#007400"/>
<rect x="1464" y="713" width="2" height="47" fill="#007400"/>
<rect x="1469" y="714" width="2" height="44" fill="#007400"/>
<rect x="1474" y="716" width="2" height="41" fill="#007400"/>
<rect x="1478" y="718" width="2" height="41" fill="#007400"/>
<rect x="1483" y="719" width="2" height="44" fill="#007400"/>
<rect x="1488" y="721" width="2" height="54" fill="#007400"/>
<rect x="1493" y="723" width="2" height="57" fill="#007400"/>
<rect x="1498" y="724" width="2" height="51" fill="#007400"/>
<rect x="1503" y="726" width="2" height="20" fill="#007400"/>
<rect x="1503" y="747" width="2" height="25" fill="#00e600"/>
<rect x="1507" y="728" width="2" height="43" fill="#007400"/>
<rect x="1512" y="730" width="2" height="18" fill="#007400"/>
<rect x="1512" y="747" width="2" height="22" fill="#00e600"/>
<rect x="1517" y="731" width="2" height="16" fill="#007400"/>
<rect x="1517" y="747" width="2" height="20" fill="#00e600"/>
<rect x="1522" y="732" width="2" height="41" fill="#007400"/>
<rect x="1527" y="734" width="2" height="10" fill="#007400"/>
<rect x="1527" y="744" width="2" height="23" fill="#00e600"/>
<rect x="1532" y="735" width="2" height="36" fill="#007400"/>
<rect x="1537" y="737" width="2" height="38" fill="#007400"/>
<rect x="1541" y="738" width="2" height="9" fill="#007400"/>
<rect x="1541" y="747" width="2" height="21" fill="#00e600"/>
<rect x="1546" y="739" width="2" height="7" fill="#007400"/>
<rect x="1546" y="746" width="2" height="17" fill="#00e600"/>
<rect x="1551" y="739" width="2" height="6" fill="#ffff00"/>
<rect x="1551" y="745" width="2" height="6" fill="#ff8000"/>
<rect x="1556" y="740" width="2" height="7" fill="#00e600"/>
<rect x="1556" y="747" width="2" height="8" fill="#ffff00"/>
<rect x="1561" y="740" width="2" height="8" fill="#00e600"/>
<rect x="1561" y="748" width="2" height="10" fill="#ffff00"/>
<rect x="1571" y="730" width="2" height="5" fill="#f01e42"/>
<rect x="1575" y="726" width="2" height="8" fill="#f01e42"/>
<rect x="1580" y="719" width="2" height="15" fill="#f01e42"/>
<rect x="1585" y="715" width="2" height="18" fill="#f01e42"/>
<rect x="1590" y="711" width="2" height="21" fill="#f01e42"/>
<rect x="1595" y="696" width="2" height="35" fill="#f01e42"/>
<rect x="1600" y="696" width="2" height="35" fill="#f01e42"/>
<rect x="1605" y="687" width="2" height="42" fill="#f01e42"/>
</g>
<polyline fill="none" stroke="#1a801a" stroke-width="1" points="-1.5,788.1 4.5,782.3 9.5,791.0"/>
<polyline fill="none" stroke="#00e000" stroke-width="1" points="9.5,791.0 14.5,781.6"/>
<polyline fill="none" stroke="#ffff00" stroke-width="1" points="14.5,781.6 19.5,756.2 23.5,759.9"/>
<polyline fill="none" stroke="#1a801a" stroke-width="1" points="23.5,759.9 28.5,783.8"/>
<polyline fill="none" stroke="#00e000" stroke-width="1" points="28.5,783.8 33.5,772.9 38.5,770.7"/>
<polyline fill="none" stroke="#ffff00" stroke-width="1" points="38.5,770.7 43.5,766.1"/>
<polyline fill="none" stroke="#1a801a" stroke-width="1" points="43.5,766.1 48.5,780.1 53.5,777.2 57.5,779.4 62.5,777.7 67.5,779.4 72.5,778.7 77.5,772.9"/>
<polyline fill="none" stroke="#ff8000" stroke-width="1" points="77.5,772.9 82.5,761.3"/>
<polyline fill="none" stroke="#00e000" stroke-width="1" points="82.5,761.3 87.5,769.3"/>
<polyline fill="none" stroke="#1a801a" stroke-width="1" points="87.5,769.3 91.5,771.9"/>
<polyline fill="none" stroke="#f01e42" stroke-width="1" points="91.5,771.9 96.5,759.1 101.5,749.0 106.5,727.2 111.5,684.6 116.5,607.3 121.5,532.5 125.5,624.8 130.5,632.2"/>
<polyline fill="none" stroke="#ffff00" stroke-width="1" points="130.5,632.2 135.5,664.7 140.5,658.4"/>
<polyline fill="none" stroke="#00e000" stroke-width="1" points="140.5,658.4 145.5,677.1 150.5,688.3 154.5,691.6"/>
<polyline fill="none" stroke="#f01e42" stroke-width="1" points="154.5,691.6 159.5,654.7 164.5,641.0 169.5,624.8 174.5,629.7 179.5,633.5 184.5,599.8 188.5,592.8"/>
<polyline fill="none" stroke="#ffff00" stroke-width="1" points="188.5,592.8 193.5,616.0"/>
<polyline fill="none" stroke="#00e000" stroke-width="1" points="193.5,616.0 198.5,660.9 203.5,665.9 208.5,668.4 213.5,659.7"/>
<polyline fill="none" stroke="#f01e42" stroke-width="1" points="213.5,659.7 218.5,624.8 222.5,632.2 227.5,628.0"/>
<polyline fill="none" stroke="#00e000" stroke-width="1" points="227.5,628.0 232.5,639.7"/>
<polyline fill="none" stroke="#f01e42" stroke-width="1" points="232.5,639.7 237.5,620.5 242.5,623.5 247.5,627.2"/>
<polyline fill="none" stroke="#00e000" stroke-width="1" points="247.5,627.2 252.5,647.2 256.5,674.6"/>
<polyline fill="none" stroke="#1a801a" stroke-width="1" points="256.5,674.6 261.5,688.3"/>
<polyline fill="none" stroke="#f01e42" stroke-width="1" points="261.5,688.3 266.5,678.4 271.5,646.7 276.5,648.4"/>
<polyline fill="none" stroke="#00e000" stroke-width="1" points="276.5,648.4 281.5,677.1 286.5,674.6 290.5,681.6"/>
<polyline fill="none" stroke="#ffff00" stroke-width="1" points="290.5,681.6 295.5,663.4"/>
<polyline fill="none" stroke="#f01e42" stroke-width="1" points="295.5,663.4 300.5,669.6 305.5,652.2 310.5,639.7 315.5,643.5"/>
<polyline fill="none" stroke="#00e000" stroke-width="1" points="315.5,643.5 319.5,657.2 324.5,663.4"/>
<polyline fill="none" stroke="#f01e42" stroke-width="1" points="324.5,663.4 329.5,636.5 334.5,637.2 339.5,642.2"/>
<polyline fill="none" stroke="#ffff00" stroke-width="1" points="339.5,642.2 344.5,645.9 349.5,647.2"/>
<polyline fill="none" stroke="#1a801a" stroke-width="1" points="349.5,647.2 353.5,670.9 358.5,672.1 363.5,672.1"/>
<polyline fill="none" stroke="#f01e42" stroke-width="1" points="363.5,672.1 368.5,670.9"/>
<polyline fill="none" stroke="#1a801a" stroke-width="1" points="368.5,670.9 373.5,674.6 378.5,680.9 383.5,692.1 387.5,697.1 392.5,707.7 397.5,713.7 402.5,718.8 407.5,722.0 412.5,726.1 417.5,730.5 421.5,742.2 426.5,749.7 431.5,757.2 436.5,764.7 441.5,770.9 446.5,778.4 451.5,772.1"/>
<polyline fill="none" stroke="#00e000" stroke-width="1" points="451.5,772.1 455.5,766.7"/>
<polyline fill="none" stroke="#1a801a" stroke-width="1" points="455.5,766.7 460.5,769.7 465.5,773.4 470.5,772.1"/>
<polyline fill="none" stroke="#00e000" stroke-width="1" points="470.5,772.1 475.5,767.2"/>
<polyline fill="none" stroke="#1a801a" stroke-width="1" points="475.5,767.2 480.5,774.6 484.5,779.1 489.5,782.9 494.5,780.9 499.5,778.4"/>
<polyline fill="none" stroke="#00e000" stroke-width="1" points="499.5,778.4 504.5,775.1"/>
<polyline fill="none" stroke="#1a801a" stroke-width="1" points="504.5,775.1 509.5,769.7"/>
<polyline fill="none" stroke="#ffff00" stroke-width="1" points="509.5,769.7 514.5,758.4 518.5,733.5"/>
<polyline fill="none" stroke="#ff8000" stroke-width="1" points="518.5,733.5 523.5,746.0 528.5,743.5"/>
<polyline fill="none" stroke="#00e000" stroke-width="1" points="528.5,743.5 533.5,748.0"/>
<polyline fill="none" stroke="#1a801a" stroke-width="1" points="533.5,748.0 538.5,734.7"/>
<polyline fill="none" stroke="#ffff00" stroke-width="1" points="538.5,734.7 543.5,726.0"/>
<polyline fill="none" stroke="#00e000" stroke-width="1" points="543.5,726.0 548.5,742.2"/>
<polyline fill="none" stroke="#ffff00" stroke-width="1" points="548.5,742.2 552.5,736.0"/>
<polyline fill="none" stroke="#f01e42" stroke-width="1" points="552.5,736.0 557.5,707.3 562.5,676.1 567.5,691.1 572.5,711.0 577.5,689.9 582.5,693.6"/>
<polyline fill="none" stroke="#ffff00" stroke-width="1" points="582.5,693.6 586.5,714.8 591.5,712.3 596.5,714.8 601.5,717.3"/>
<polyline fill="none" stroke="#f01e42" stroke-width="1" points="601.5,717.3 606.5,704.8"/>
<polyline fill="none" stroke="#ffff00" stroke-width="1" points="606.5,704.8 611.5,717.3"/>
<polyline fill="none" stroke="#00e000" stroke-width="1" points="611.5,717.3 616.5,721.0 620.5,721.0"/>
<polyline fill="none" stroke="#ff8000" stroke-width="1" points="620.5,721.0 625.5,718.5"/>
<polyline fill="none" stroke="#00e000" stroke-width="1" points="625.5,718.5 630.5,721.0"/>
<polyline fill="none" stroke="#f01e42" stroke-width="1" points="630.5,721.0 635.5,703.6 640.5,707.3 645.5,696.1"/>
<polyline fill="none" stroke="#ffff00" stroke-width="1" points="645.5,696.1 650.5,711.0"/>
<polyline fill="none" stroke="#1a801a" stroke-width="1" points="650.5,711.0 654.5,719.8 659.5,728.5 664.5,737.2 669.5,742.2 674.5,745.5 679.5,732.2 683.5,747.2 688.5,763.4"/>
<polyline fill="none" stroke="#00e000" stroke-width="1" points="688.5,763.4 693.5,743.5"/>
<polyline fill="none" stroke="#1a801a" stroke-width="1" points="693.5,743.5 698.5,757.2 703.5,760.9 708.5,799.6 713.5,804.6 717.5,815.0 722.5,813.3 727.5,810.8 732.5,809.6 737.5,815.8 742.5,822.5 747.5,820.8 751.5,820.0"/>
<polyline fill="none" stroke="#00e000" stroke-width="1" points="751.5,820.0 756.5,817.7 761.5,814.8 766.5,811.1 771.5,808.1 776.5,812.0"/>
<polyline fill="none" stroke="#1a801a" stroke-width="1" points="776.5,812.0 781.5,818.3 785.5,816.5 790.5,814.5"/>
<polyline fill="none" stroke="#00e000" stroke-width="1" points="790.5,814.5 795.5,808.3 800.5,803.3 805.5,803.8"/>
<polyline fill="none" stroke="#1a801a" stroke-width="1" points="805.5,803.8 810.5,809.6 815.5,813.3 819.5,815.0 824.5,818.3 829.5,823.3 834.5,828.3 839.5,831.5"/>
<polyline fill="none" stroke="#ffff00" stroke-width="1" points="839.5,831.5 844.5,819.5 848.5,805.8 853.5,810.0 858.5,790.8"/>
<polyline fill="none" stroke="#ff8000" stroke-width="1" points="858.5,790.8 863.5,793.3 868.5,796.6"/>
<polyline fill="none" stroke="#00e000" stroke-width="1" points="868.5,796.6 873.5,802.8"/>
<polyline fill="none" stroke="#ff8000" stroke-width="1" points="873.5,802.8 878.5,785.9"/>
<polyline fill="none" stroke="#f01e42" stroke-width="1" points="878.5,785.9 882.5,775.9 887.5,770.9 892.5,747.2 897.5,757.2"/>
<polyline fill="none" stroke="#ffff00" stroke-width="1" points="897.5,757.2 902.5,769.7"/>
<polyline fill="none" stroke="#f01e42" stroke-width="1" points="902.5,769.7 907.5,753.4 912.5,746.7 916.5,750.9 921.5,741.5 926.5,750.9"/>
<polyline fill="none" stroke="#ffff00" stroke-width="1" points="926.5,750.9 931.5,757.2"/>
<polyline fill="none" stroke="#00e000" stroke-width="1" points="931.5,757.2 936.5,764.7 941.5,773.4"/>
<polyline fill="none" stroke="#1a801a" stroke-width="1" points="941.5,773.4 946.5,775.9 950.5,779.1"/>
<polyline fill="none" stroke="#ffff00" stroke-width="1" points="950.5,779.1 955.5,770.9"/>
<polyline fill="none" stroke="#f01e42" stroke-width="1" points="955.5,770.9 960.5,762.2 965.5,758.4"/>
<polyline fill="none" stroke="#00e000" stroke-width="1" points="965.5,758.4 970.5,773.4"/>
<polyline fill="none" stroke="#f01e42" stroke-width="1" points="970.5,773.4 975.5,765.9 980.5,742.2 984.5,734.7 989.5,737.2 994.5,734.7 999.5,737.2"/>
<polyline fill="none" stroke="#ffff00" stroke-width="1" points="999.5,737.2 1004.5,744.7"/>
<polyline fill="none" stroke="#f01e42" stroke-width="1" points="1004.5,744.7 1009.5,724.8 1013.5,707.3 1018.5,703.6 1023.5,690.6 1028.5,702.3"/>
<polyline fill="none" stroke="#ffff00" stroke-width="1" points="1028.5,702.3 1033.5,709.8 1038.5,714.8"/>
<polyline fill="none" stroke="#f01e42" stroke-width="1" points="1038.5,714.8 1043.5,701.6 1047.5,698.4 1052.5,703.4"/>
<polyline fill="none" stroke="#00e000" stroke-width="1" points="1052.5,703.4 1057.5,709.6"/>
<polyline fill="none" stroke="#ffff00" stroke-width="1" points="1057.5,709.6 1062.5,707.1"/>
<polyline fill="none" stroke="#f01e42" stroke-width="1" points="1062.5,707.1 1067.5,689.7 1072.5,674.7 1077.5,663.5 1081.5,615.4 1086.5,622.3 1091.5,620.3 1096.5,628.6"/>
<polyline fill="none" stroke="#ffff00" stroke-width="1" points="1096.5,628.6 1101.5,636.1"/>
<polyline fill="none" stroke="#f01e42" stroke-width="1" points="1101.5,636.1 1106.5,630.6"/>
<polyline fill="none" stroke="#ffff00" stroke-width="1" points="1106.5,630.6 1111.5,637.3"/>
<polyline fill="none" stroke="#00e000" stroke-width="1" points="1111.5,637.3 1115.5,647.8"/>
<polyline fill="none" stroke="#ffff00" stroke-width="1" points="1115.5,647.8 1120.5,646.0"/>
<polyline fill="none" stroke="#f01e42" stroke-width="1" points="1120.5,646.0 1125.5,632.3 1130.5,628.6 1135.5,613.6 1140.5,612.4 1145.5,606.1 1149.5,609.9"/>
<polyline fill="none" stroke="#00e000" stroke-width="1" points="1149.5,609.9 1154.5,626.1 1159.5,634.8 1164.5,632.3 1169.5,634.3"/>
<polyline fill="none" stroke="#f01e42" stroke-width="1" points="1169.5,634.3 1174.5,616.6"/>
<polyline fill="none" stroke="#00e000" stroke-width="1" points="1174.5,616.6 1178.5,644.8"/>
<polyline fill="none" stroke="#1a801a" stroke-width="1" points="1178.5,644.8 1183.5,654.8 1188.5,656.8 1193.5,658.5"/>
<polyline fill="none" stroke="#00e000" stroke-width="1" points="1193.5,658.5 1198.5,644.8"/>
<polyline fill="none" stroke="#f01e42" stroke-width="1" points="1198.5,644.8 1203.5,634.8 1208.5,637.3"/>
<polyline fill="none" stroke="#00e000" stroke-width="1" points="1208.5,637.3 1212.5,664.7"/>
<polyline fill="none" stroke="#f01e42" stroke-width="1" points="1212.5,664.7 1217.5,633.6 1222.5,628.1"/>
<polyline fill="none" stroke="#1a801a" stroke-width="1" points="1222.5,628.1 1227.5,648.5 1232.5,654.8"/>
<polyline fill="none" stroke="#f01e42" stroke-width="1" points="1232.5,654.8 1237.5,672.2"/>
<polyline fill="none" stroke="#1a801a" stroke-width="1" points="1237.5,672.2 1242.5,677.2"/>
<polyline fill="none" stroke="#00e000" stroke-width="1" points="1242.5,677.2 1246.5,667.2"/>
<polyline fill="none" stroke="#1a801a" stroke-width="1" points="1246.5,667.2 1251.5,677.2 1256.5,683.4 1261.5,689.7 1266.5,695.9 1271.5,694.7 1276.5,704.6"/>
<polyline fill="none" stroke="#00e000" stroke-width="1" points="1276.5,704.6 1280.5,673.5"/>
<polyline fill="none" stroke="#1a801a" stroke-width="1" points="1280.5,673.5 1285.5,682.2 1290.5,689.7 1295.5,694.7 1300.5,700.9 1305.5,707.1 1310.5,719.6 1314.5,729.6 1319.5,737.1 1324.5,728.3 1329.5,733.3 1334.5,739.1 1339.5,735.1 1343.5,738.3 1348.5,743.3 1353.5,746.5 1358.5,747.5"/>
<polyline fill="none" stroke="#00e000" stroke-width="1" points="1358.5,747.5 1363.5,740.8 1368.5,738.3"/>
<polyline fill="none" stroke="#1a801a" stroke-width="1" points="1368.5,738.3 1373.5,704.6"/>
<polyline fill="none" stroke="#f01e42" stroke-width="1" points="1373.5,704.6 1377.5,693.0 1382.5,689.5 1387.5,683.4"/>
<polyline fill="none" stroke="#ffff00" stroke-width="1" points="1387.5,683.4 1392.5,689.7 1397.5,695.9 1402.5,697.2 1407.5,696.7"/>
<polyline fill="none" stroke="#ff8000" stroke-width="1" points="1407.5,696.7 1411.5,686.7"/>
<polyline fill="none" stroke="#ffff00" stroke-width="1" points="1411.5,686.7 1416.5,695.9"/>
<polyline fill="none" stroke="#00e000" stroke-width="1" points="1416.5,695.9 1421.5,704.1"/>
<polyline fill="none" stroke="#f01e42" stroke-width="1" points="1421.5,704.1 1426.5,693.4"/>
<polyline fill="none" stroke="#1a801a" stroke-width="1" points="1426.5,693.4 1431.5,704.6 1436.5,717.2 1441.5,734.7 1445.5,749.6 1450.5,762.1 1455.5,771.3 1460.5,763.3 1465.5,760.8 1470.5,759.6 1475.5,758.4 1479.5,759.6 1484.5,764.6 1489.5,775.8 1494.5,780.8 1499.5,776.6"/>
<polyline fill="none" stroke="#00e000" stroke-width="1" points="1499.5,776.6 1504.5,772.6"/>
<polyline fill="none" stroke="#1a801a" stroke-width="1" points="1504.5,772.6 1508.5,772.1"/>
<polyline fill="none" stroke="#00e000" stroke-width="1" points="1508.5,772.1 1513.5,770.1 1518.5,768.3"/>
<polyline fill="none" stroke="#1a801a" stroke-width="1" points="1518.5,768.3 1523.5,774.1"/>
<polyline fill="none" stroke="#00e000" stroke-width="1" points="1523.5,774.1 1528.5,767.1"/>
<polyline fill="none" stroke="#1a801a" stroke-width="1" points="1528.5,767.1 1533.5,772.1 1538.5,775.8"/>
<polyline fill="none" stroke="#00e000" stroke-width="1" points="1538.5,775.8 1542.5,769.6 1547.5,764.6"/>
<polyline fill="none" stroke="#ff8000" stroke-width="1" points="1547.5,764.6 1552.5,752.1"/>
<polyline fill="none" stroke="#ffff00" stroke-width="1" points="1552.5,752.1 1557.5,755.9 1562.5,759.1"/>
<polyline fill="none" stroke="#ff8000" stroke-width="1" points="1562.5,759.1 1567.5,735.9"/>
<polyline fill="none" stroke="#f01e42" stroke-width="1" points="1567.5,735.9 1572.5,728.4 1576.5,724.7 1581.5,717.2 1586.5,713.5 1591.5,709.7 1596.5,694.8 1601.5,694.3 1606.5,685.5"/>
<polyline fill="none" stroke="#10b810" stroke-width="1" points="-1.5,755.2 4.5,756.0 9.5,756.9 14.5,757.8"/>
<polyline fill="none" stroke="#ffff00" stroke-width="1" points="14.5,757.8 19.5,758.4"/>
<polyline fill="none" stroke="#10b810" stroke-width="1" points="19.5,758.4 23.5,758.9 28.5,759.4 33.5,759.8 38.5,760.1 43.5,760.5 48.5,761.0 53.5,761.5 57.5,762.0 62.5,762.4 67.5,762.8 72.5,763.2 77.5,763.5"/>
<polyline fill="none" stroke="#ffff00" stroke-width="1" points="77.5,763.5 82.5,763.8"/>
<polyline fill="none" stroke="#10b810" stroke-width="1" points="82.5,763.8 87.5,764.0 91.5,764.2"/>
<polyline fill="none" stroke="#f01e42" stroke-width="1" points="91.5,764.2 96.5,763.7 101.5,763.2 106.5,762.3 111.5,759.8 116.5,755.1 121.5,749.2 125.5,744.3 130.5,740.5"/>
<polyline fill="none" stroke="#ffff00" stroke-width="1" points="130.5,740.5 135.5,737.7 140.5,735.2"/>
<polyline fill="none" stroke="#00e000" stroke-width="1" points="140.5,735.2 145.5,733.1 150.5,730.7 154.5,728.7"/>
<polyline fill="none" stroke="#f01e42" stroke-width="1" points="154.5,728.7 159.5,726.6 164.5,723.9 169.5,721.1 174.5,718.1 179.5,715.0 184.5,711.7 188.5,708.3"/>
<polyline fill="none" stroke="#ffff00" stroke-width="1" points="188.5,708.3 193.5,705.9"/>
<polyline fill="none" stroke="#00e000" stroke-width="1" points="193.5,705.9 198.5,703.9 203.5,702.7 208.5,701.8 213.5,700.1"/>
<polyline fill="none" stroke="#f01e42" stroke-width="1" points="213.5,700.1 218.5,697.9 222.5,695.7 227.5,693.5"/>
<polyline fill="none" stroke="#00e000" stroke-width="1" points="227.5,693.5 232.5,691.4"/>
<polyline fill="none" stroke="#f01e42" stroke-width="1" points="232.5,691.4 237.5,689.4 242.5,687.4 247.5,685.6"/>
<polyline fill="none" stroke="#00e000" stroke-width="1" points="247.5,685.6 252.5,684.2 256.5,683.4"/>
<polyline fill="none" stroke="#10b810" stroke-width="1" points="256.5,683.4 261.5,682.6"/>
<polyline fill="none" stroke="#f01e42" stroke-width="1" points="261.5,682.6 266.5,682.0 271.5,681.4 276.5,680.6"/>
<polyline fill="none" stroke="#00e000" stroke-width="1" points="276.5,680.6 281.5,680.2 286.5,680.6"/>
<polyline fill="none" stroke="#10b810" stroke-width="1" points="286.5,680.6 290.5,680.7"/>
<polyline fill="none" stroke="#ffff00" stroke-width="1" points="290.5,680.7 295.5,680.1"/>
<polyline fill="none" stroke="#f01e42" stroke-width="1" points="295.5,680.1 300.5,679.4 305.5,677.9 310.5,676.6 315.5,675.9"/>
<polyline fill="none" stroke="#00e000" stroke-width="1" points="315.5,675.9 319.5,675.3 324.5,674.6"/>
<polyline fill="none" stroke="#f01e42" stroke-width="1" points="324.5,674.6 329.5,673.9 334.5,673.0 339.5,672.2"/>
<polyline fill="none" stroke="#ffff00" stroke-width="1" points="339.5,672.2 344.5,671.2 349.5,670.2"/>
<polyline fill="none" stroke="#10b810" stroke-width="1" points="349.5,670.2 353.5,669.7 358.5,670.2 363.5,670.8 368.5,671.4 373.5,672.0 378.5,672.6 383.5,673.2 387.5,673.5 392.5,674.3 397.5,675.8 402.5,677.2 407.5,678.7 412.5,680.2 417.5,681.8 421.5,683.7 426.5,685.7 431.5,688.0 436.5,690.4 441.5,692.8 446.5,695.2 451.5,697.7 455.5,700.1 460.5,702.5 465.5,705.0 470.5,707.4 475.5,709.8 480.5,712.1 484.5,714.4 489.5,716.6 494.5,718.6 499.5,720.5 504.5,722.3 509.5,723.7 514.5,724.5 518.5,725.1 523.5,725.7 528.5,726.3 533.5,726.3 538.5,726.1 543.5,726.2 548.5,726.6 552.5,726.3"/>
<polyline fill="none" stroke="#f01e42" stroke-width="1" points="552.5,726.3 557.5,725.6 562.5,724.8 567.5,724.0 572.5,723.1 577.5,722.3 582.5,721.5"/>
<polyline fill="none" stroke="#ffff00" stroke-width="1" points="582.5,721.5 586.5,720.7 591.5,720.2 596.5,720.0 601.5,719.8"/>
<polyline fill="none" stroke="#f01e42" stroke-width="1" points="601.5,719.8 606.5,719.8"/>
<polyline fill="none" stroke="#ffff00" stroke-width="1" points="606.5,719.8 611.5,719.8"/>
<polyline fill="none" stroke="#10b810" stroke-width="1" points="611.5,719.8 616.5,719.7 620.5,719.5 625.5,719.3 630.5,719.1"/>
<polyline fill="none" stroke="#f01e42" stroke-width="1" points="630.5,719.1 635.5,718.8 640.5,718.5 645.5,718.1"/>
<polyline fill="none" stroke="#ffff00" stroke-width="1" points="645.5,718.1 650.5,717.8"/>
<polyline fill="none" stroke="#10b810" stroke-width="1" points="650.5,717.8 654.5,718.2 659.5,718.5 664.5,719.1 669.5,719.7 674.5,720.3 679.5,720.9 683.5,722.1 688.5,723.3 693.5,724.3 698.5,725.3 703.5,726.6 708.5,729.0 713.5,731.4 717.5,733.9 722.5,736.3 727.5,738.7 732.5,741.2 737.5,743.6 742.5,746.0 747.5,748.4 751.5,750.9 756.5,753.1 761.5,755.3 766.5,757.3 771.5,759.0 776.5,760.6 781.5,762.8 785.5,764.4 790.5,765.9 795.5,767.3 800.5,768.5 805.5,769.6 810.5,771.1 815.5,772.5 819.5,774.1 824.5,775.7 829.5,777.4 834.5,778.7 839.5,779.9 844.5,781.1 848.5,781.9 853.5,782.6 858.5,783.1 863.5,783.5 868.5,783.9 873.5,784.2 878.5,784.6"/>
<polyline fill="none" stroke="#f01e42" stroke-width="1" points="878.5,784.6 882.5,783.9 887.5,783.0 892.5,782.1 897.5,781.4"/>
<polyline fill="none" stroke="#ffff00" stroke-width="1" points="897.5,781.4 902.5,780.6"/>
<polyline fill="none" stroke="#f01e42" stroke-width="1" points="902.5,780.6 907.5,779.8 912.5,779.2 916.5,778.5 921.5,777.7 926.5,776.9"/>
<polyline fill="none" stroke="#ffff00" stroke-width="1" points="926.5,776.9 931.5,776.2"/>
<polyline fill="none" stroke="#00e000" stroke-width="1" points="931.5,776.2 936.5,775.5 941.5,774.8"/>
<polyline fill="none" stroke="#10b810" stroke-width="1" points="941.5,774.8 946.5,774.6 950.5,774.6"/>
<polyline fill="none" stroke="#ffff00" stroke-width="1" points="950.5,774.6 955.5,774.6"/>
<polyline fill="none" stroke="#f01e42" stroke-width="1" points="955.5,774.6 960.5,774.3 965.5,774.0"/>
<polyline fill="none" stroke="#10b810" stroke-width="1" points="965.5,774.0 970.5,773.5"/>
<polyline fill="none" stroke="#f01e42" stroke-width="1" points="970.5,773.5 975.5,772.8 980.5,772.1 984.5,771.2 989.5,770.2 994.5,769.1 999.5,768.0"/>
<polyline fill="none" stroke="#ffff00" stroke-width="1" points="999.5,768.0 1004.5,766.8"/>
<polyline fill="none" stroke="#f01e42" stroke-width="1" points="1004.5,766.8 1009.5,765.2 1013.5,763.4 1018.5,761.7 1023.5,759.9 1028.5,758.2"/>
<polyline fill="none" stroke="#ffff00" stroke-width="1" points="1028.5,758.2 1033.5,756.6 1038.5,754.7"/>
<polyline fill="none" stroke="#f01e42" stroke-width="1" points="1038.5,754.7 1043.5,751.8 1047.5,750.0 1052.5,748.3"/>
<polyline fill="none" stroke="#00e000" stroke-width="1" points="1052.5,748.3 1057.5,746.7"/>
<polyline fill="none" stroke="#ffff00" stroke-width="1" points="1057.5,746.7 1062.5,745.0"/>
<polyline fill="none" stroke="#f01e42" stroke-width="1" points="1062.5,745.0 1067.5,743.2 1072.5,741.2 1077.5,738.7 1081.5,735.2 1086.5,731.6 1091.5,728.4 1096.5,725.3"/>
<polyline fill="none" stroke="#ffff00" stroke-width="1" points="1096.5,725.3 1101.5,722.3"/>
<polyline fill="none" stroke="#f01e42" stroke-width="1" points="1101.5,722.3 1106.5,719.3"/>
<polyline fill="none" stroke="#ffff00" stroke-width="1" points="1106.5,719.3 1111.5,716.5"/>
<polyline fill="none" stroke="#00e000" stroke-width="1" points="1111.5,716.5 1115.5,713.8"/>
<polyline fill="none" stroke="#ffff00" stroke-width="1" points="1115.5,713.8 1120.5,711.3"/>
<polyline fill="none" stroke="#f01e42" stroke-width="1" points="1120.5,711.3 1125.5,708.7 1130.5,706.0 1135.5,703.4 1140.5,700.3 1145.5,697.3 1149.5,694.4"/>
<polyline fill="none" stroke="#00e000" stroke-width="1" points="1149.5,694.4 1154.5,691.9 1159.5,689.9 1164.5,688.0 1169.5,685.9"/>
<polyline fill="none" stroke="#f01e42" stroke-width="1" points="1169.5,685.9 1174.5,683.9"/>
<polyline fill="none" stroke="#00e000" stroke-width="1" points="1174.5,683.9 1178.5,682.7"/>
<polyline fill="none" stroke="#f01e42" stroke-width="1" points="1178.5,682.7 1183.5,681.7 1188.5,680.8 1193.5,680.0"/>
<polyline fill="none" stroke="#00e000" stroke-width="1" points="1193.5,680.0 1198.5,678.9"/>
<polyline fill="none" stroke="#f01e42" stroke-width="1" points="1198.5,678.9 1203.5,677.7 1208.5,676.5"/>
<polyline fill="none" stroke="#00e000" stroke-width="1" points="1208.5,676.5 1212.5,675.2"/>
<polyline fill="none" stroke="#f01e42" stroke-width="1" points="1212.5,675.2 1217.5,674.2 1222.5,673.2 1227.5,672.7 1232.5,672.7"/>
<polyline fill="none" stroke="#10b810" stroke-width="1" points="1232.5,672.7 1237.5,672.9 1242.5,673.2"/>
<polyline fill="none" stroke="#00e000" stroke-width="1" points="1242.5,673.2 1246.5,673.6"/>
<polyline fill="none" stroke="#10b810" stroke-width="1" points="1246.5,673.6 1251.5,674.0 1256.5,674.4 1261.5,674.9 1266.5,675.3 1271.5,675.7 1276.5,676.0"/>
<polyline fill="none" stroke="#00e000" stroke-width="1" points="1276.5,676.0 1280.5,676.4"/>
<polyline fill="none" stroke="#10b810" stroke-width="1" points="1280.5,676.4 1285.5,676.9 1290.5,677.7 1295.5,678.6 1300.5,679.4 1305.5,680.3 1310.5,681.2 1314.5,682.2 1319.5,684.0 1324.5,685.9 1329.5,687.4 1334.5,689.0 1339.5,690.5 1343.5,691.9 1348.5,693.5 1353.5,695.1 1358.5,696.4 1363.5,697.6 1368.5,698.5 1373.5,699.2"/>
<polyline fill="none" stroke="#f01e42" stroke-width="1" points="1373.5,699.2 1377.5,699.2 1382.5,699.2 1387.5,698.9"/>
<polyline fill="none" stroke="#ffff00" stroke-width="1" points="1387.5,698.9 1392.5,698.6 1397.5,698.3"/>
<polyline fill="none" stroke="#10b810" stroke-width="1" points="1397.5,698.3 1402.5,698.0"/>
<polyline fill="none" stroke="#ffff00" stroke-width="1" points="1402.5,698.0 1407.5,697.9 1411.5,697.9 1416.5,697.9"/>
<polyline fill="none" stroke="#10b810" stroke-width="1" points="1416.5,697.9 1421.5,697.9"/>
<polyline fill="none" stroke="#f01e42" stroke-width="1" points="1421.5,697.9 1426.5,698.1"/>
<polyline fill="none" stroke="#10b810" stroke-width="1" points="1426.5,698.1 1431.5,698.6 1436.5,699.8 1441.5,700.8 1445.5,702.3 1450.5,703.9 1455.5,705.5 1460.5,707.2 1465.5,709.0 1470.5,710.8 1475.5,712.5 1479.5,714.1 1484.5,715.8 1489.5,717.6 1494.5,719.3 1499.5,720.9 1504.5,722.6 1508.5,724.4 1513.5,726.1 1518.5,727.5 1523.5,729.0 1528.5,730.4 1533.5,731.8 1538.5,733.2 1542.5,734.4 1547.5,735.2 1552.5,736.0 1557.5,736.3 1562.5,736.6 1567.5,736.4"/>
<polyline fill="none" stroke="#f01e42" stroke-width="1" points="1567.5,736.4 1572.5,736.0 1576.5,735.4 1581.5,734.6 1586.5,734.0 1591.5,733.4 1596.5,732.5 1601.5,731.5 1606.5,730.0"/>
</svg>
<div class="sm" style="left:45.95px;top:417.85px"><svg width="14.1" height="14.1" viewBox="-7.05 -7.05 14.1 14.1"><ellipse cx="-2.4" cy="-2.1" rx="0.8" ry="1.1" fill="#46203a"/><ellipse cx="2.4" cy="-2.1" rx="0.8" ry="1.1" fill="#46203a"/><path d="M-3.3 1.9Q0 6.4 3.3 1.9Q0 3.6 -3.3 1.9Z" fill="#46203a" stroke="#46203a" stroke-width="0.5" stroke-linejoin="round"/></svg></div>
<div class="sm" style="left:79.85px;top:425.95px"><svg width="14.1" height="14.1" viewBox="-7.05 -7.05 14.1 14.1"><ellipse cx="-2.4" cy="-2.1" rx="0.8" ry="1.1" fill="#46203a"/><ellipse cx="2.4" cy="-2.1" rx="0.8" ry="1.1" fill="#46203a"/><path d="M-3.3 1.9Q0 6.4 3.3 1.9Q0 3.6 -3.3 1.9Z" fill="#46203a" stroke="#46203a" stroke-width="0.5" stroke-linejoin="round"/></svg></div>
<div class="sm" style="left:219.65px;top:233.25px"><svg width="14.1" height="14.1" viewBox="-7.05 -7.05 14.1 14.1"><ellipse cx="-2.4" cy="-2.1" rx="0.8" ry="1.1" fill="#46203a"/><ellipse cx="2.4" cy="-2.1" rx="0.8" ry="1.1" fill="#46203a"/><path d="M-3.3 1.9Q0 6.4 3.3 1.9Q0 3.6 -3.3 1.9Z" fill="#46203a" stroke="#46203a" stroke-width="0.5" stroke-linejoin="round"/></svg></div>
<div class="sm" style="left:239.55px;top:213.25px"><svg width="14.1" height="14.1" viewBox="-7.05 -7.05 14.1 14.1"><ellipse cx="-2.4" cy="-2.1" rx="0.8" ry="1.1" fill="#46203a"/><ellipse cx="2.4" cy="-2.1" rx="0.8" ry="1.1" fill="#46203a"/><path d="M-3.3 1.9Q0 6.4 3.3 1.9Q0 3.6 -3.3 1.9Z" fill="#46203a" stroke="#46203a" stroke-width="0.5" stroke-linejoin="round"/></svg></div>
<div class="sm" style="left:312.95px;top:250.75px"><svg width="14.1" height="14.1" viewBox="-7.05 -7.05 14.1 14.1"><ellipse cx="-2.4" cy="-2.1" rx="0.8" ry="1.1" fill="#46203a"/><ellipse cx="2.4" cy="-2.1" rx="0.8" ry="1.1" fill="#46203a"/><path d="M-3.3 1.9Q0 6.4 3.3 1.9Q0 3.6 -3.3 1.9Z" fill="#46203a" stroke="#46203a" stroke-width="0.5" stroke-linejoin="round"/></svg></div>
<div class="sm" style="left:515.85px;top:421.35px"><svg width="14.1" height="14.1" viewBox="-7.05 -7.05 14.1 14.1"><ellipse cx="-2.4" cy="-2.1" rx="0.8" ry="1.1" fill="#46203a"/><ellipse cx="2.4" cy="-2.1" rx="0.8" ry="1.1" fill="#46203a"/><path d="M-3.3 1.9Q0 6.4 3.3 1.9Q0 3.6 -3.3 1.9Z" fill="#46203a" stroke="#46203a" stroke-width="0.5" stroke-linejoin="round"/></svg></div>
<div class="sm" style="left:647.85px;top:329.85px"><svg width="14.1" height="14.1" viewBox="-7.05 -7.05 14.1 14.1"><ellipse cx="-2.4" cy="-2.1" rx="0.8" ry="1.1" fill="#46203a"/><ellipse cx="2.4" cy="-2.1" rx="0.8" ry="1.1" fill="#46203a"/><path d="M-3.3 1.9Q0 6.4 3.3 1.9Q0 3.6 -3.3 1.9Z" fill="#46203a" stroke="#46203a" stroke-width="0.5" stroke-linejoin="round"/></svg></div>
<div class="sm" style="left:797.85px;top:482.15px"><svg width="14.1" height="14.1" viewBox="-7.05 -7.05 14.1 14.1"><ellipse cx="-2.4" cy="-2.1" rx="0.8" ry="1.1" fill="#46203a"/><ellipse cx="2.4" cy="-2.1" rx="0.8" ry="1.1" fill="#46203a"/><path d="M-3.3 1.9Q0 6.4 3.3 1.9Q0 3.6 -3.3 1.9Z" fill="#46203a" stroke="#46203a" stroke-width="0.5" stroke-linejoin="round"/></svg></div>
<div class="sm" style="left:850.95px;top:482.15px"><svg width="14.1" height="14.1" viewBox="-7.05 -7.05 14.1 14.1"><ellipse cx="-2.4" cy="-2.1" rx="0.8" ry="1.1" fill="#46203a"/><ellipse cx="2.4" cy="-2.1" rx="0.8" ry="1.1" fill="#46203a"/><path d="M-3.3 1.9Q0 6.4 3.3 1.9Q0 3.6 -3.3 1.9Z" fill="#46203a" stroke="#46203a" stroke-width="0.5" stroke-linejoin="round"/></svg></div>
<div class="sm" style="left:981.95px;top:402.15px"><svg width="14.1" height="14.1" viewBox="-7.05 -7.05 14.1 14.1"><ellipse cx="-2.4" cy="-2.1" rx="0.8" ry="1.1" fill="#46203a"/><ellipse cx="2.4" cy="-2.1" rx="0.8" ry="1.1" fill="#46203a"/><path d="M-3.3 1.9Q0 6.4 3.3 1.9Q0 3.6 -3.3 1.9Z" fill="#46203a" stroke="#46203a" stroke-width="0.5" stroke-linejoin="round"/></svg></div>
<div class="sm" style="left:1176.65px;top:210.15px"><svg width="14.1" height="14.1" viewBox="-7.05 -7.05 14.1 14.1"><ellipse cx="-2.4" cy="-2.1" rx="0.8" ry="1.1" fill="#46203a"/><ellipse cx="2.4" cy="-2.1" rx="0.8" ry="1.1" fill="#46203a"/><path d="M-3.3 1.9Q0 6.4 3.3 1.9Q0 3.6 -3.3 1.9Z" fill="#46203a" stroke="#46203a" stroke-width="0.5" stroke-linejoin="round"/></svg></div>
<div class="sm" style="left:1224.75px;top:222.15px"><svg width="14.1" height="14.1" viewBox="-7.05 -7.05 14.1 14.1"><ellipse cx="-2.4" cy="-2.1" rx="0.8" ry="1.1" fill="#46203a"/><ellipse cx="2.4" cy="-2.1" rx="0.8" ry="1.1" fill="#46203a"/><path d="M-3.3 1.9Q0 6.4 3.3 1.9Q0 3.6 -3.3 1.9Z" fill="#46203a" stroke="#46203a" stroke-width="0.5" stroke-linejoin="round"/></svg></div>
<div class="sm" style="left:1375.95px;top:357.15px"><svg width="14.1" height="14.1" viewBox="-7.05 -7.05 14.1 14.1"><ellipse cx="-2.4" cy="-2.1" rx="0.8" ry="1.1" fill="#46203a"/><ellipse cx="2.4" cy="-2.1" rx="0.8" ry="1.1" fill="#46203a"/><path d="M-3.3 1.9Q0 6.4 3.3 1.9Q0 3.6 -3.3 1.9Z" fill="#46203a" stroke="#46203a" stroke-width="0.5" stroke-linejoin="round"/></svg></div>
<div class="sm" style="left:1549.85px;top:416.75px"><svg width="14.1" height="14.1" viewBox="-7.05 -7.05 14.1 14.1"><ellipse cx="-2.4" cy="-2.1" rx="0.8" ry="1.1" fill="#46203a"/><ellipse cx="2.4" cy="-2.1" rx="0.8" ry="1.1" fill="#46203a"/><path d="M-3.3 1.9Q0 6.4 3.3 1.9Q0 3.6 -3.3 1.9Z" fill="#46203a" stroke="#46203a" stroke-width="0.5" stroke-linejoin="round"/></svg></div>
<svg width="1612" height="842" viewBox="0 0 1612 842">
<polyline fill="none" stroke="#00ff00" stroke-width="2" stroke-linejoin="round" stroke-linecap="round" points="0.0,372.5 6.2,376.2 12.5,383.1 18.7,390.6 24.9,395.6 31.2,399.9 37.4,403.0 43.6,406.2 49.9,409.3 56.1,413.6 62.3,416.8 67.3,418.0"/>
<polyline fill="none" stroke="#ff00ff" stroke-width="2" stroke-linejoin="round" stroke-linecap="round" points="67.3,418.0 74.8,415.5 81.0,411.1 87.3,410.5 93.5,408.7 99.8,406.8 102.2,406.2 106.0,401.8 109.7,394.9 112.2,387.5 114.1,380.0 115.5,370.0"/>
<polyline fill="none" stroke="#ff00ff" stroke-width="2" stroke-linejoin="round" stroke-linecap="round" points="115.5,370.0 115.5,370.0 117.5,357.0 120.0,342.0 124.9,338.3 127.4,332.1 131.2,324.6 134.9,318.4 139.9,307.1 144.9,299.7 149.9,292.2 154.4,284.7 158.6,276.0 162.3,267.2 167.3,254.8 172.3,242.3 177.3,229.8 182.3,216.1 187.3,204.9 191.0,201.1 194.3,201.1 197.3,207.4 198.5,211.1"/>
<polyline fill="none" stroke="#00ff00" stroke-width="2" stroke-linejoin="round" stroke-linecap="round" points="198.5,211.1 202.2,221.1 207.2,225.3 212.2,228.6"/>
<polyline fill="none" stroke="#ff00ff" stroke-width="2" stroke-linejoin="round" stroke-linecap="round" points="212.2,228.6 216.0,221.1 220.9,221.1 225.9,216.1 230.9,211.1 235.9,203.6 239.7,201.9 243.4,201.9"/>
<polyline fill="none" stroke="#00ff00" stroke-width="2" stroke-linejoin="round" stroke-linecap="round" points="243.4,201.9 248.4,203.6 253.4,207.4 259.6,213.6 264.6,219.9 269.6,224.8 274.6,227.3 279.6,231.1 285.8,232.3 293.3,232.3 299.5,236.1 305.7,239.3 312.0,239.3 318.2,242.3 324.4,246.0 329.4,247.3"/>
<polyline fill="none" stroke="#ff00ff" stroke-width="2" stroke-linejoin="round" stroke-linecap="round" points="329.4,247.3 334.4,243.5 339.4,239.8 344.4,236.1 348.1,234.3 351.9,237.3 354.4,240.3"/>
<polyline fill="none" stroke="#00ff00" stroke-width="2" stroke-linejoin="round" stroke-linecap="round" points="354.4,240.3 359.4,241.0"/>
<polyline fill="none" stroke="#ff00ff" stroke-width="2" stroke-linejoin="round" stroke-linecap="round" points="359.4,241.0 364.3,239.8 373.1,239.8 378.1,241.8"/>
<polyline fill="none" stroke="#00ff00" stroke-width="2" stroke-linejoin="round" stroke-linecap="round" points="378.1,241.8 384.3,244.8 389.3,248.5 394.3,257.3 401.7,264.7 408.0,271.0 413.0,282.2 419.2,294.7 426.7,307.1"/>
<polyline fill="none" stroke="#00ff00" stroke-width="2" stroke-linejoin="round" stroke-linecap="round" points="426.7,307.1 427.4,307.5 432.4,317.5 437.4,327.4 442.4,337.4 447.4,346.1 452.4,353.6 458.6,362.3 464.8,371.1 472.3,379.8 479.8,388.5 487.3,396.0 494.8,402.2 502.2,407.2 507.2,409.0 511.5,409.0"/>
<polyline fill="none" stroke="#ff00ff" stroke-width="2" stroke-linejoin="round" stroke-linecap="round" points="511.5,409.0 516.0,404.7 520.9,402.7 524.7,399.8 529.7,397.8 533.4,397.3 538.4,392.3 543.4,388.5 548.4,386.0 552.1,383.5 555.9,378.6 559.6,372.3 562.1,363.6 567.1,357.4"/>
<polyline fill="none" stroke="#ff00ff" stroke-width="2" stroke-linejoin="round" stroke-linecap="round" points="567.1,357.4 569.3,355.0 573.0,349.8 576.8,342.9 580.5,336.0 584.9,332.3 589.9,328.6 594.8,326.7 601.1,325.8"/>
<polyline fill="none" stroke="#00ff00" stroke-width="2" stroke-linejoin="round" stroke-linecap="round" points="601.1,325.8 606.7,325.4"/>
<polyline fill="none" stroke="#ff00ff" stroke-width="2" stroke-linejoin="round" stroke-linecap="round" points="606.7,325.4 611.0,318.6 616.0,318.0 620.4,318.8"/>
<polyline fill="none" stroke="#00ff00" stroke-width="2" stroke-linejoin="round" stroke-linecap="round" points="620.4,318.8 625.4,318.6"/>
<polyline fill="none" stroke="#ff00ff" stroke-width="2" stroke-linejoin="round" stroke-linecap="round" points="625.4,318.6 630.4,316.1 635.4,311.1 637.9,313.6 640.3,315.5"/>
<polyline fill="none" stroke="#00ff00" stroke-width="2" stroke-linejoin="round" stroke-linecap="round" points="640.3,315.5 644.7,317.3 649.7,318.3 654.7,319.2 658.4,321.7 662.2,324.8 667.2,327.9 673.4,332.3 679.0,332.9 684.6,337.9 689.6,342.3 695.8,344.8 702.1,348.5 705.8,353.5"/>
<polyline fill="none" stroke="#00ff00" stroke-width="2" stroke-linejoin="round" stroke-linecap="round" points="705.8,353.5 709.2,359.9 715.5,371.1 721.7,382.3 727.9,393.5 734.2,404.7 740.4,416.0 746.6,425.9 752.9,435.9 759.1,444.6 765.3,449.6 771.6,455.9 776.6,462.1 780.3,466.6 785.3,469.1 790.3,469.6"/>
<polyline fill="none" stroke="#ff00ff" stroke-width="2" stroke-linejoin="round" stroke-linecap="round" points="790.3,469.6 795.3,469.1 800.0,467.8"/>
<polyline fill="none" stroke="#ff00ff" stroke-width="2" stroke-linejoin="round" stroke-linecap="round" points="800.0,467.8 800.0,468.3 805.0,469.1 811.2,469.6"/>
<polyline fill="none" stroke="#00ff00" stroke-width="2" stroke-linejoin="round" stroke-linecap="round" points="811.2,469.6 818.7,469.6"/>
<polyline fill="none" stroke="#ff00ff" stroke-width="2" stroke-linejoin="round" stroke-linecap="round" points="818.7,469.6 823.7,470.1 828.7,470.3"/>
<polyline fill="none" stroke="#00ff00" stroke-width="2" stroke-linejoin="round" stroke-linecap="round" points="828.7,470.3 839.9,471.1"/>
<polyline fill="none" stroke="#ff00ff" stroke-width="2" stroke-linejoin="round" stroke-linecap="round" points="839.9,471.1 844.9,470.1"/>
<polyline fill="none" stroke="#00ff00" stroke-width="2" stroke-linejoin="round" stroke-linecap="round" points="844.9,470.1 853.6,470.1"/>
<polyline fill="none" stroke="#ff00ff" stroke-width="2" stroke-linejoin="round" stroke-linecap="round" points="853.6,470.1 858.6,467.1 863.6,464.6 869.8,462.8 877.3,462.1 882.3,459.6 887.3,455.9 891.0,449.6 894.8,444.6 899.8,440.9 904.7,437.2 909.7,429.7 914.7,420.9 919.7,412.2 922.2,408.5 927.2,406.0 932.2,402.2 937.2,399.0 941.6,399.0"/>
<polyline fill="none" stroke="#00ff00" stroke-width="2" stroke-linejoin="round" stroke-linecap="round" points="941.6,399.0 944.6,399.8"/>
<polyline fill="none" stroke="#ff00ff" stroke-width="2" stroke-linejoin="round" stroke-linecap="round" points="944.6,399.8 948.4,397.8 952.1,394.8 955.9,391.8 960.8,389.8 965.8,389.8 969.6,391.8"/>
<polyline fill="none" stroke="#00ff00" stroke-width="2" stroke-linejoin="round" stroke-linecap="round" points="969.6,391.8 976.6,392.3"/>
<polyline fill="none" stroke="#ff00ff" stroke-width="2" stroke-linejoin="round" stroke-linecap="round" points="976.6,392.3 980.0,389.3 983.3,386.0 989.5,386.0"/>
<polyline fill="none" stroke="#00ff00" stroke-width="2" stroke-linejoin="round" stroke-linecap="round" points="989.5,386.0 994.5,385.5"/>
<polyline fill="none" stroke="#ff00ff" stroke-width="2" stroke-linejoin="round" stroke-linecap="round" points="994.5,385.5 1005.0,385.0 1010.7,377.3 1015.7,371.1 1020.7,362.3 1025.7,356.1 1030.7,349.9 1035.7,345.4 1040.6,341.1 1045.6,334.9 1050.6,328.7 1055.6,324.2 1061.8,322.4 1068.1,317.0"/>
<polyline fill="none" stroke="#ff00ff" stroke-width="2" stroke-linejoin="round" stroke-linecap="round" points="1068.1,317.0 1071.0,312.0 1076.0,303.3 1079.7,293.3 1082.2,285.8 1085.9,278.3 1089.7,273.3 1095.9,267.1 1102.1,260.9 1108.4,254.6 1114.6,247.2 1120.8,239.7 1127.1,233.4 1132.1,227.2 1137.1,218.5 1142.0,208.5 1145.8,201.0 1149.5,195.5 1154.5,194.8 1160.7,194.8 1164.0,197.3"/>
<polyline fill="none" stroke="#00ff00" stroke-width="2" stroke-linejoin="round" stroke-linecap="round" points="1164.0,197.3 1169.5,197.8"/>
<polyline fill="none" stroke="#ff00ff" stroke-width="2" stroke-linejoin="round" stroke-linecap="round" points="1169.5,197.8 1174.5,197.8 1178.2,199.3"/>
<polyline fill="none" stroke="#00ff00" stroke-width="2" stroke-linejoin="round" stroke-linecap="round" points="1178.2,199.3 1184.4,202.3 1189.4,204.3 1193.9,205.0"/>
<polyline fill="none" stroke="#ff00ff" stroke-width="2" stroke-linejoin="round" stroke-linecap="round" points="1193.9,205.0 1200.6,204.3 1208.1,204.0"/>
<polyline fill="none" stroke="#00ff00" stroke-width="2" stroke-linejoin="round" stroke-linecap="round" points="1208.1,204.0 1213.1,207.3 1219.4,209.8 1224.3,213.5 1229.3,217.2 1234.3,221.0 1240.5,224.7 1246.8,229.7 1253.0,235.9 1259.3,240.9 1266.7,246.7 1274.2,252.1 1281.7,257.1 1289.2,263.4 1296.7,269.6 1302.9,277.1 1309.1,285.8 1314.1,294.5 1320.3,302.0 1326.6,307.0 1334.1,313.2"/>
<polyline fill="none" stroke="#00ff00" stroke-width="2" stroke-linejoin="round" stroke-linecap="round" points="1334.1,313.2 1341.7,319.8 1349.2,327.3 1356.6,333.5 1361.6,337.3 1365.4,342.3 1368.6,344.8"/>
<polyline fill="none" stroke="#ff00ff" stroke-width="2" stroke-linejoin="round" stroke-linecap="round" points="1368.6,344.8 1376.6,344.8 1382.8,341.8 1389.1,337.3 1395.3,334.8 1402.8,328.6 1407.8,327.3 1414.0,319.8 1419.0,317.3 1422.7,316.8 1427.7,312.3 1432.7,308.6 1440.2,307.9"/>
<polyline fill="none" stroke="#00ff00" stroke-width="2" stroke-linejoin="round" stroke-linecap="round" points="1440.2,307.9 1445.2,309.9 1450.2,311.8 1455.1,318.6 1461.4,326.1 1468.9,336.0 1476.3,346.0 1483.8,354.7 1488.8,361.0 1495.0,369.7 1501.3,378.4 1507.5,387.2 1513.7,394.6 1521.2,400.9 1528.7,402.1 1536.2,404.1 1544.9,404.6"/>
<polyline fill="none" stroke="#ff00ff" stroke-width="2" stroke-linejoin="round" stroke-linecap="round" points="1544.9,404.6 1556.1,404.1"/>
<polyline fill="none" stroke="#00ff00" stroke-width="2" stroke-linejoin="round" stroke-linecap="round" points="1556.1,404.1 1563.1,403.9"/>
<polyline fill="none" stroke="#ff00ff" stroke-width="2" stroke-linejoin="round" stroke-linecap="round" points="1563.1,403.9 1567.4,400.9 1573.6,394.6 1579.8,387.2 1586.1,380.9 1592.3,372.2 1598.5,362.2 1603.5,354.7 1606.5,350.2"/>
<polyline fill="none" stroke="#00ff00" stroke-width="2" stroke-linejoin="round" stroke-linecap="round" points="1005.0,385.3 1009.5,385.3"/>
<polyline fill="none" stroke="#0a86ff" stroke-width="2" stroke-linejoin="round" stroke-linecap="round" points="0.0,414.3 3.7,422.4 7.5,428.6 9.4,430.2"/>
<polyline fill="none" stroke="#ff0000" stroke-width="2" stroke-linejoin="round" stroke-linecap="round" points="9.4,430.2 13.7,429.9 18.7,421.0 23.0,414.6"/>
<polyline fill="none" stroke="#0a86ff" stroke-width="2" stroke-linejoin="round" stroke-linecap="round" points="23.0,414.6 28.4,413.6"/>
<polyline fill="none" stroke="#ff0000" stroke-width="2" stroke-linejoin="round" stroke-linecap="round" points="28.4,413.6 33.0,409.9 37.4,406.5"/>
<polyline fill="none" stroke="#0a86ff" stroke-width="2" stroke-linejoin="round" stroke-linecap="round" points="37.4,406.5 43.0,408.0 47.4,413.0"/>
<polyline fill="none" stroke="#ff0000" stroke-width="2" stroke-linejoin="round" stroke-linecap="round" points="47.4,413.0 51.1,411.8"/>
<polyline fill="none" stroke="#0a86ff" stroke-width="2" stroke-linejoin="round" stroke-linecap="round" points="51.1,411.8 56.1,413.0 62.3,414.9 67.3,418.6"/>
<polyline fill="none" stroke="#ff0000" stroke-width="2" stroke-linejoin="round" stroke-linecap="round" points="67.3,418.6 72.3,418.6 77.3,416.8 81.0,411.8 87.3,409.9 92.3,406.8 97.3,401.8 101.0,394.9 104.7,387.5 107.9,378.7 109.7,370.0 112.2,349.8 113.5,332.3 115.2,312.3 117.2,282.4 118.7,269.7 122.4,234.8"/>
<polyline fill="none" stroke="#ff0000" stroke-width="2" stroke-linejoin="round" stroke-linecap="round" points="122.4,234.8 122.4,234.8 126.2,207.4 129.9,187.4 134.9,177.5"/>
<polyline fill="none" stroke="#0a86ff" stroke-width="2" stroke-linejoin="round" stroke-linecap="round" points="134.9,177.5 139.9,188.7 142.4,204.9 144.9,222.3 147.4,242.3 151.1,257.3 154.4,267.7"/>
<polyline fill="none" stroke="#ff0000" stroke-width="2" stroke-linejoin="round" stroke-linecap="round" points="154.4,267.7 159.9,266.0 164.3,261.0 168.6,244.8 172.3,234.8 177.3,217.4 181.0,204.9 184.8,191.2 188.5,182.4 192.8,178.7"/>
<polyline fill="none" stroke="#0a86ff" stroke-width="2" stroke-linejoin="round" stroke-linecap="round" points="192.8,178.7 198.5,188.7 202.2,197.4 206.0,209.9 209.7,223.6 213.5,233.6 217.2,236.8"/>
<polyline fill="none" stroke="#ff0000" stroke-width="2" stroke-linejoin="round" stroke-linecap="round" points="217.2,236.8 222.2,229.8 227.2,219.9 232.2,209.9 235.9,202.4 238.4,199.4"/>
<polyline fill="none" stroke="#0a86ff" stroke-width="2" stroke-linejoin="round" stroke-linecap="round" points="238.4,199.4 243.4,198.7"/>
<polyline fill="none" stroke="#ff0000" stroke-width="2" stroke-linejoin="round" stroke-linecap="round" points="243.4,198.7 246.6,197.9"/>
<polyline fill="none" stroke="#0a86ff" stroke-width="2" stroke-linejoin="round" stroke-linecap="round" points="246.6,197.9 250.9,203.6 255.9,213.6 259.6,226.1 263.3,237.3 267.1,247.3 270.8,254.3 274.6,254.8 278.3,256.8"/>
<polyline fill="none" stroke="#ff0000" stroke-width="2" stroke-linejoin="round" stroke-linecap="round" points="278.3,256.8 282.0,256.0 285.8,252.8"/>
<polyline fill="none" stroke="#0a86ff" stroke-width="2" stroke-linejoin="round" stroke-linecap="round" points="285.8,252.8 290.8,253.5 295.8,258.5 300.2,264.7"/>
<polyline fill="none" stroke="#ff0000" stroke-width="2" stroke-linejoin="round" stroke-linecap="round" points="300.2,264.7 304.5,256.0 309.5,244.8 313.7,234.8 319.5,233.6 324.4,229.8 329.4,226.8 334.4,226.1"/>
<polyline fill="none" stroke="#0a86ff" stroke-width="2" stroke-linejoin="round" stroke-linecap="round" points="334.4,226.1 339.4,225.3"/>
<polyline fill="none" stroke="#ff0000" stroke-width="2" stroke-linejoin="round" stroke-linecap="round" points="339.4,225.3 344.4,222.3 347.6,218.6"/>
<polyline fill="none" stroke="#0a86ff" stroke-width="2" stroke-linejoin="round" stroke-linecap="round" points="347.6,218.6 351.9,224.8 356.9,234.8 361.8,244.8 368.1,254.8 373.1,263.5 379.3,269.7 384.3,276.0 389.3,283.4 393.0,292.2 398.0,304.6 403.0,315.9 408.0,324.6 413.0,334.6 418.0,343.3 422.9,352.0"/>
<polyline fill="none" stroke="#0a86ff" stroke-width="2" stroke-linejoin="round" stroke-linecap="round" points="422.9,352.0 426.4,359.9 431.7,369.8 436.2,377.6 441.1,386.3 446.1,395.0 449.9,401.7 454.9,406.5 459.9,407.2 465.3,409.0"/>
<polyline fill="none" stroke="#ff0000" stroke-width="2" stroke-linejoin="round" stroke-linecap="round" points="465.3,409.0 469.8,407.2 474.8,404.7"/>
<polyline fill="none" stroke="#0a86ff" stroke-width="2" stroke-linejoin="round" stroke-linecap="round" points="474.8,404.7 479.8,408.5 484.8,412.2 489.8,414.7 494.8,417.2 499.8,419.0 504.2,419.2"/>
<polyline fill="none" stroke="#ff0000" stroke-width="2" stroke-linejoin="round" stroke-linecap="round" points="504.2,419.2 503.5,419.2 508.5,416.7 511.5,411.2 514.7,403.7 517.2,396.8 520.9,388.8 524.7,381.8 528.4,375.6 533.4,370.6 536.7,365.3 540.1,360.6 544.4,358.9 548.9,357.1 552.1,355.4"/>
<polyline fill="none" stroke="#ff0000" stroke-width="2" stroke-linejoin="round" stroke-linecap="round" points="552.1,355.4 552.4,355.0 554.9,347.3 558.7,336.0 562.4,324.8 566.2,316.1 569.9,308.6 573.6,301.1 576.8,294.9 578.6,293.4 580.5,293.0"/>
<polyline fill="none" stroke="#0a86ff" stroke-width="2" stroke-linejoin="round" stroke-linecap="round" points="580.5,293.0 583.6,296.1 585.5,299.9 587.4,303.6 591.1,308.0 593.6,310.5 596.7,311.7 599.8,316.1 602.9,319.8 606.1,322.1"/>
<polyline fill="none" stroke="#ff0000" stroke-width="2" stroke-linejoin="round" stroke-linecap="round" points="606.1,322.1 610.4,321.3"/>
<polyline fill="none" stroke="#0a86ff" stroke-width="2" stroke-linejoin="round" stroke-linecap="round" points="610.4,321.3 612.9,323.6 616.0,325.4 619.8,326.7 623.5,327.3 626.6,328.6 630.4,332.3"/>
<polyline fill="none" stroke="#ff0000" stroke-width="2" stroke-linejoin="round" stroke-linecap="round" points="630.4,332.3 634.1,329.8 638.5,327.3 642.2,322.9 646.0,318.0 649.7,315.1 653.7,314.8"/>
<polyline fill="none" stroke="#0a86ff" stroke-width="2" stroke-linejoin="round" stroke-linecap="round" points="653.7,314.8 655.9,317.3 659.7,323.6 663.4,328.6 665.9,333.5 668.4,342.3 671.5,349.8 674.6,355.0"/>
<polyline fill="none" stroke="#0a86ff" stroke-width="2" stroke-linejoin="round" stroke-linecap="round" points="674.6,355.0 673.1,353.6 676.8,357.9 680.5,359.9 684.3,367.3 688.0,373.1"/>
<polyline fill="none" stroke="#ff0000" stroke-width="2" stroke-linejoin="round" stroke-linecap="round" points="688.0,373.1 692.3,371.6"/>
<polyline fill="none" stroke="#0a86ff" stroke-width="2" stroke-linejoin="round" stroke-linecap="round" points="692.3,371.6 696.8,374.8 700.5,379.8 704.2,388.5 708.0,397.3 711.7,408.5 714.7,419.7 718.0,432.2 721.7,447.1 724.2,455.9 727.2,463.3 730.4,465.1 735.4,467.1 740.4,470.8 745.4,474.6 750.4,477.6 755.4,479.1 760.8,479.1"/>
<polyline fill="none" stroke="#ff0000" stroke-width="2" stroke-linejoin="round" stroke-linecap="round" points="760.8,479.1 761.0,479.2 766.0,473.6 771.0,470.4 776.0,468.0"/>
<polyline fill="none" stroke="#0a86ff" stroke-width="2" stroke-linejoin="round" stroke-linecap="round" points="776.0,468.0 779.8,468.0"/>
<polyline fill="none" stroke="#ff0000" stroke-width="2" stroke-linejoin="round" stroke-linecap="round" points="779.8,468.0 784.7,468.0"/>
<polyline fill="none" stroke="#0a86ff" stroke-width="2" stroke-linejoin="round" stroke-linecap="round" points="784.7,468.0 790.3,468.6"/>
<polyline fill="none" stroke="#ff0000" stroke-width="2" stroke-linejoin="round" stroke-linecap="round" points="790.3,468.6 796.0,468.3 800.9,466.1 805.9,461.1 814.7,460.8"/>
<polyline fill="none" stroke="#0a86ff" stroke-width="2" stroke-linejoin="round" stroke-linecap="round" points="814.7,460.8 818.4,463.0 823.4,468.0 829.6,474.2 834.6,479.8 839.0,484.2"/>
<polyline fill="none" stroke="#ff0000" stroke-width="2" stroke-linejoin="round" stroke-linecap="round" points="839.0,484.2 839.2,484.0 843.6,482.5 848.6,479.6 852.4,475.8 856.1,469.6 858.6,462.1 862.3,454.6 866.1,450.9 869.8,448.9 873.6,448.9 877.3,444.6 881.0,439.7 886.0,433.4 889.8,424.7 893.5,414.7 897.3,403.5 902.2,397.3 907.2,391.0 912.7,384.8"/>
<polyline fill="none" stroke="#0a86ff" stroke-width="2" stroke-linejoin="round" stroke-linecap="round" points="912.7,384.8 916.0,383.5"/>
<polyline fill="none" stroke="#ff0000" stroke-width="2" stroke-linejoin="round" stroke-linecap="round" points="916.0,383.5 920.9,380.3 924.7,376.1 927.2,374.1"/>
<polyline fill="none" stroke="#0a86ff" stroke-width="2" stroke-linejoin="round" stroke-linecap="round" points="927.2,374.1 932.2,374.3 935.9,378.6 939.7,384.8 943.4,393.5 947.1,401.0 950.9,406.0 954.6,409.2"/>
<polyline fill="none" stroke="#ff0000" stroke-width="2" stroke-linejoin="round" stroke-linecap="round" points="954.6,409.2 960.8,408.5 965.8,405.2 970.8,401.0 975.8,396.0 979.6,389.8 983.3,383.5 988.3,376.1 993.3,367.3 997.0,359.9 999.5,357.9"/>
<polyline fill="none" stroke="#0a86ff" stroke-width="2" stroke-linejoin="round" stroke-linecap="round" points="999.5,357.9 1004.5,358.6"/>
<polyline fill="none" stroke="#ff0000" stroke-width="2" stroke-linejoin="round" stroke-linecap="round" points="1004.5,358.6 1008.2,353.6 1012.0,346.1 1015.7,337.4 1019.5,328.7 1023.2,318.7 1025.7,312.5 1028.2,308.7"/>
<polyline fill="none" stroke="#ff0000" stroke-width="2" stroke-linejoin="round" stroke-linecap="round" points="1028.2,308.7 1029.8,308.3 1033.6,307.8"/>
<polyline fill="none" stroke="#0a86ff" stroke-width="2" stroke-linejoin="round" stroke-linecap="round" points="1033.6,307.8 1039.8,308.8"/>
<polyline fill="none" stroke="#ff0000" stroke-width="2" stroke-linejoin="round" stroke-linecap="round" points="1039.8,308.8 1043.5,308.3"/>
<polyline fill="none" stroke="#0a86ff" stroke-width="2" stroke-linejoin="round" stroke-linecap="round" points="1043.5,308.3 1047.3,310.2 1052.3,310.7 1057.3,310.7"/>
<polyline fill="none" stroke="#ff0000" stroke-width="2" stroke-linejoin="round" stroke-linecap="round" points="1057.3,310.7 1062.2,309.5 1067.2,305.8 1071.0,299.5 1074.7,289.6 1077.2,279.6 1079.7,267.1 1082.2,252.1 1084.7,237.2 1087.2,224.7 1090.9,212.2 1094.7,202.3 1098.4,196.0 1101.4,194.0"/>
<polyline fill="none" stroke="#0a86ff" stroke-width="2" stroke-linejoin="round" stroke-linecap="round" points="1101.4,194.0 1105.9,198.5 1110.9,204.8 1115.9,211.0 1120.8,215.2"/>
<polyline fill="none" stroke="#ff0000" stroke-width="2" stroke-linejoin="round" stroke-linecap="round" points="1120.8,215.2 1125.8,213.0 1130.8,212.7 1134.6,207.3 1138.3,199.8 1142.0,191.0 1145.8,183.6 1149.5,177.8"/>
<polyline fill="none" stroke="#0a86ff" stroke-width="2" stroke-linejoin="round" stroke-linecap="round" points="1149.5,177.8 1154.5,177.8 1159.5,183.6 1164.5,189.8 1169.5,197.3 1174.5,201.0 1179.5,206.0 1184.4,213.5 1189.4,219.7 1194.4,227.2 1198.2,232.2"/>
<polyline fill="none" stroke="#ff0000" stroke-width="2" stroke-linejoin="round" stroke-linecap="round" points="1198.2,232.2 1203.1,229.7 1208.1,226.0"/>
<polyline fill="none" stroke="#0a86ff" stroke-width="2" stroke-linejoin="round" stroke-linecap="round" points="1208.1,226.0 1211.9,227.7"/>
<polyline fill="none" stroke="#ff0000" stroke-width="2" stroke-linejoin="round" stroke-linecap="round" points="1211.9,227.7 1216.9,221.0 1221.8,215.2"/>
<polyline fill="none" stroke="#0a86ff" stroke-width="2" stroke-linejoin="round" stroke-linecap="round" points="1221.8,215.2 1226.8,219.7 1231.8,223.5 1236.8,229.7 1240.5,237.2 1244.3,245.9 1246.8,254.6 1250.5,263.4 1254.3,269.6 1259.3,274.6 1264.2,280.8 1270.5,288.3 1276.2,295.0"/>
<polyline fill="none" stroke="#ff0000" stroke-width="2" stroke-linejoin="round" stroke-linecap="round" points="1276.2,295.0 1281.7,291.5 1286.7,289.6 1290.4,289.6"/>
<polyline fill="none" stroke="#0a86ff" stroke-width="2" stroke-linejoin="round" stroke-linecap="round" points="1290.4,289.6 1294.2,290.0"/>
<polyline fill="none" stroke="#ff0000" stroke-width="2" stroke-linejoin="round" stroke-linecap="round" points="1294.2,290.0 1299.7,289.6"/>
<polyline fill="none" stroke="#0a86ff" stroke-width="2" stroke-linejoin="round" stroke-linecap="round" points="1299.7,289.6 1302.9,294.5 1306.6,302.0 1310.4,312.0"/>
<polyline fill="none" stroke="#0a86ff" stroke-width="2" stroke-linejoin="round" stroke-linecap="round" points="1310.4,312.0 1318.0,328.6 1321.7,337.3 1325.5,343.5 1329.2,347.3 1332.9,351.0 1336.7,352.7 1341.7,352.2 1345.4,354.2 1349.2,358.5 1352.9,362.2 1356.6,364.7 1361.6,366.0 1367.1,366.0"/>
<polyline fill="none" stroke="#ff0000" stroke-width="2" stroke-linejoin="round" stroke-linecap="round" points="1367.1,366.0 1370.4,359.7 1372.8,349.8 1375.3,341.0 1377.8,331.0 1380.3,321.1 1384.1,308.6 1387.8,297.4 1391.1,288.7"/>
<polyline fill="none" stroke="#0a86ff" stroke-width="2" stroke-linejoin="round" stroke-linecap="round" points="1391.1,288.7 1396.5,289.9 1401.5,291.9 1406.5,294.9 1411.5,296.1 1416.5,297.4 1421.0,299.1"/>
<polyline fill="none" stroke="#ff0000" stroke-width="2" stroke-linejoin="round" stroke-linecap="round" points="1421.0,299.1 1426.0,299.1"/>
<polyline fill="none" stroke="#0a86ff" stroke-width="2" stroke-linejoin="round" stroke-linecap="round" points="1426.0,299.1 1431.5,298.6 1433.9,303.6 1437.7,312.3 1441.4,321.1 1445.2,331.0 1447.7,341.0 1450.2,351.0 1452.6,362.2 1455.1,372.2 1457.6,379.7 1461.4,387.2 1465.1,393.4 1470.1,395.9"/>
<polyline fill="none" stroke="#ff0000" stroke-width="2" stroke-linejoin="round" stroke-linecap="round" points="1470.1,395.9 1475.1,395.4 1478.8,392.1 1483.3,390.9"/>
<polyline fill="none" stroke="#0a86ff" stroke-width="2" stroke-linejoin="round" stroke-linecap="round" points="1483.3,390.9 1487.6,395.9 1492.5,400.9 1497.5,405.9 1502.5,410.8 1508.8,415.1"/>
<polyline fill="none" stroke="#ff0000" stroke-width="2" stroke-linejoin="round" stroke-linecap="round" points="1508.8,415.1 1513.7,412.1 1518.7,409.6 1523.7,408.4 1528.7,406.6"/>
<polyline fill="none" stroke="#0a86ff" stroke-width="2" stroke-linejoin="round" stroke-linecap="round" points="1528.7,406.6 1533.7,408.4 1538.7,408.4"/>
<polyline fill="none" stroke="#ff0000" stroke-width="2" stroke-linejoin="round" stroke-linecap="round" points="1538.7,408.4 1544.9,407.1 1549.9,402.1 1556.1,397.1 1562.4,392.1 1567.4,384.7 1572.3,373.4 1576.1,364.7 1581.1,352.2 1586.1,341.0 1591.1,331.0 1597.3,319.8 1602.3,309.9 1606.5,303.6"/>
</svg>
<div style="position:absolute;left:0;top:0;width:1612px;height:2px;background:#383838"></div>
<span class="t c" style="left:-3px;top:2px;color:#c0c0c0;font-size:10px">★</span>
<svg class="ab" style="left:9px;top:2px" width="10" height="10" viewBox="0 0 10 10"><path d="M2.5 2.5h5v5h-5z" fill="none" stroke="#f00" stroke-width="2"/><path d="M0 0l3 3M10 0l-3 3M0 10l3-3M10 10l-3-3" stroke="#f00" stroke-width="1.2"/></svg>
<span class="t c" style="left:25px;top:2px;color:#c0c0c0">泰格医药</span>
<span class="t c" style="left:73px;top:2px;color:#ff5050">日线</span>
<span class="t c" style="left:103px;top:2px;color:#c0c0c0">黄金趋势波段</span><span class="t a" style="left:175px;top:3px;color:#c0c0c0">(26,12,9,9,3,3,6,12,24)</span>
<span class="t a" style="left:319px;top:3px;color:#ffffff">M5: 58.356</span>
<svg class="ab" style="left:381px;top:2px" width="7" height="12" viewBox="0 0 7 12"><path d="M3.5 0.5V11" stroke="#ff5050" stroke-width="1" fill="none"/><path d="M3.5 0L1.2 4.2H5.8Z" fill="#ff5050"/></svg>
<span class="t a" style="left:386.5px;top:3px;color:#c0c0c0">,</span>
<span class="t c b" style="left:397px;top:2px;color:#ff00ff">中线</span><span class="t a b" style="left:421px;top:3px;color:#ff00ff">: 54.451</span>
<svg class="ab" style="left:471px;top:2px" width="7" height="12" viewBox="0 0 7 12"><path d="M3.5 0.5V11" stroke="#ff5050" stroke-width="1" fill="none"/><path d="M3.5 0L1.2 4.2H5.8Z" fill="#ff5050"/></svg>
<span class="t a" style="left:476.5px;top:3px;color:#ff00ff">,</span>
<span class="t a" style="left:833px;top:3px;color:#ff00ff">54.451</span>
<svg class="ab" style="left:871px;top:2px" width="7" height="12" viewBox="0 0 7 12"><path d="M3.5 0.5V11" stroke="#ff5050" stroke-width="1" fill="none"/><path d="M3.5 0L1.2 4.2H5.8Z" fill="#ff5050"/></svg>
<span class="t a" style="left:876.5px;top:3px;color:#ff00ff">,</span>
<span class="t a" style="left:1093px;top:3px;color:#c8d8c8">58.356</span>
<svg class="ab" style="left:1131px;top:2px" width="7" height="12" viewBox="0 0 7 12"><path d="M3.5 0.5V11" stroke="#ff5050" stroke-width="1" fill="none"/><path d="M3.5 0L1.2 4.2H5.8Z" fill="#ff5050"/></svg>
<span class="t a" style="left:1136.5px;top:3px;color:#c8d8c8">,</span>
<span class="t c" style="left:-2px;top:30px;color:#ffffff">基金重仓</span><span class="t a" style="left:46px;top:31px;color:#ffffff">,</span><span class="t c" style="left:52px;top:30px;color:#ffffff">中盘</span><span class="t a" style="left:76px;top:31px;color:#ffffff">,H</span><span class="t c" style="left:88px;top:30px;color:#ffffff">股</span><span class="t a" style="left:100px;top:31px;color:#ffffff">,</span><span class="t c" style="left:106px;top:30px;color:#ffffff">融资融券</span><span class="t a" style="left:154px;top:31px;color:#ffffff">,CRO</span><span class="t c" style="left:178px;top:30px;color:#ffffff">概念</span><span class="t a" style="left:202px;top:31px;color:#ffffff">,</span><span class="t c" style="left:208px;top:30px;color:#ffffff">深证成指</span><span class="t a" style="left:256px;top:31px;color:#ffffff">,</span><span class="t c" style="left:262px;top:30px;color:#ffffff">沪深</span><span class="t a" style="left:286px;top:31px;color:#ffffff">300,</span><span class="t c" style="left:310px;top:30px;color:#ffffff">互联医疗</span><span class="t a" style="left:358px;top:31px;color:#ffffff">,</span><span class="t c" style="left:364px;top:30px;color:#ffffff">医疗器械</span><span class="t a" style="left:412px;top:31px;color:#ffffff">,</span><span class="t c" style="left:418px;top:30px;color:#ffffff">国证</span><span class="t a" style="left:442px;top:31px;color:#ffffff">A</span><span class="t c" style="left:448px;top:30px;color:#ffffff">指</span><span class="t a" style="left:460px;top:31px;color:#ffffff">,</span><span class="t c" style="left:466px;top:30px;color:#ffffff">国证</span><span class="t a" style="left:490px;top:31px;color:#ffffff">1000,</span><span class="t c" style="left:520px;top:30px;color:#ffffff">国证</span><span class="t a" style="left:544px;top:31px;color:#ffffff">300,</span><span class="t c" style="left:568px;top:30px;color:#ffffff">巨潮中盘</span><span class="t a" style="left:616px;top:31px;color:#ffffff">,</span><span class="t c" style="left:622px;top:30px;color:#ffffff">大中盘</span><span class="t a" style="left:658px;top:31px;color:#ffffff">,</span><span class="t c" style="left:664px;top:30px;color:#ffffff">中小盘</span><span class="t a" style="left:700px;top:31px;color:#ffffff">,1000</span><span class="t c" style="left:730px;top:30px;color:#ffffff">医药</span><span class="t a" style="left:754px;top:31px;color:#ffffff">,</span><span class="t c" style="left:760px;top:30px;color:#ffffff">生物医药</span><span class="t a" style="left:808px;top:31px;color:#ffffff">,</span><span class="t c" style="left:814px;top:30px;color:#ffffff">国证医药</span><span class="t a" style="left:862px;top:31px;color:#ffffff">,</span><span class="t c" style="left:868px;top:30px;color:#ffffff">南方低碳</span><span class="t a" style="left:916px;top:31px;color:#ffffff">,</span><span class="t c" style="left:922px;top:30px;color:#ffffff">中经</span><span class="t a" style="left:946px;top:31px;color:#ffffff">GDP,</span><span class="t c" style="left:970px;top:30px;color:#ffffff">浙江省</span><span class="t a" style="left:1006px;top:31px;color:#ffffff">,</span><span class="t c" style="left:1012px;top:30px;color:#ffffff">医药生物</span><span class="t a" style="left:1060px;top:31px;color:#ffffff">,</span><span class="t c" style="left:1066px;top:30px;color:#ffffff">技术服务</span>
<span class="t c b" style="left:-3px;top:50px;color:#ffff00">流通股比例</span><span class="t a b" style="left:57px;top:51px;color:#ffff00">: 65.76%</span><span class="t c b" style="left:105px;top:50px;color:#ffff00">；净利润总市值比</span><span class="t a b" style="left:201px;top:51px;color:#ffff00">(%): 1.965</span><span class="t c b" style="left:261px;top:50px;color:#ffff00">；净利润同比</span><span class="t a b" style="left:333px;top:51px;color:#ffff00">: 25.448%</span><span class="t c b" style="left:387px;top:50px;color:#ffff00">，净资产收益率</span><span class="t a b" style="left:471px;top:51px;color:#ffff00">: 4.89%</span><span class="t c b" style="left:513px;top:50px;color:#ffff00">，销售毛利率</span><span class="t a b" style="left:585px;top:51px;color:#ffff00">: 29.161%</span>
<div style="position:absolute;left:17px;top:14px;width:2px;height:8px;background:#fff"></div><div style="position:absolute;left:15px;top:17px;width:6px;height:2px;background:#fff"></div>
<div style="position:absolute;left:197px;top:14px;width:2px;height:8px;background:#fff"></div><div style="position:absolute;left:195px;top:17px;width:6px;height:2px;background:#fff"></div>
<div style="position:absolute;left:682px;top:14px;width:2px;height:8px;background:#fff"></div><div style="position:absolute;left:680px;top:17px;width:6px;height:2px;background:#fff"></div>
<div style="position:absolute;left:784px;top:14px;width:2px;height:8px;background:#fff"></div><div style="position:absolute;left:782px;top:17px;width:6px;height:2px;background:#fff"></div>
<div style="position:absolute;left:1192px;top:14px;width:2px;height:8px;background:#fff"></div><div style="position:absolute;left:1190px;top:17px;width:6px;height:2px;background:#fff"></div>
<div style="position:absolute;left:1372px;top:14px;width:2px;height:8px;background:#fff"></div><div style="position:absolute;left:1370px;top:17px;width:6px;height:2px;background:#fff"></div>
<span class="t" style="left:930px;top:12px;color:#fff;font-size:12px;font-family:'DejaVu Sans',sans-serif">✱</span>
<div style="position:absolute;left:1478px;top:0;width:134px;height:41px;background:radial-gradient(circle at 50% 0%,#ff4a1a 0%,#f52c08 60%,#f02000 100%)"></div>
<span class="t c" style="left:1485px;top:7px;color:#ffff00;font-size:13.6px;font-weight:bold;line-height:14px;height:14px">股道边</span>
<span class="t c" style="left:1528px;top:9px;color:#ffc800;font-size:10px;font-weight:bold;line-height:10px;height:10px">指标公式量化资源</span>
<span class="t" style="left:1485px;top:19px;color:#fff;font-size:15px;font-weight:bold;line-height:18px;height:18px;font-family:'Liberation Sans',sans-serif;">www.de6688.com</span>
<span class="t c" style="left:-3px;top:520px;color:#ffffff">富赢市场热度</span><span class="t c" style="left:75px;top:520px;color:#ffffff">短线</span><span class="t a" style="left:99px;top:521px;color:#ffffff">: 60.300</span>
<svg class="ab" style="left:149px;top:520px" width="7" height="12" viewBox="0 0 7 12"><path d="M3.5 0.5V11" stroke="#ff5050" stroke-width="1" fill="none"/><path d="M3.5 0L1.2 4.2H5.8Z" fill="#ff5050"/></svg>
<span class="t a" style="left:154.5px;top:521px;color:#ffffff">,</span>
<span class="t c" style="left:165px;top:520px;color:#ffff00">中线</span><span class="t a" style="left:189px;top:521px;color:#ffff00">: 54.574</span>
<svg class="ab" style="left:239px;top:520px" width="7" height="12" viewBox="0 0 7 12"><path d="M3.5 0.5V11" stroke="#ff5050" stroke-width="1" fill="none"/><path d="M3.5 0L1.2 4.2H5.8Z" fill="#ff5050"/></svg>
<span class="t a" style="left:244.5px;top:521px;color:#ffff00">,</span>
<span class="t c" style="left:255px;top:520px;color:#ff00ff">热度</span><span class="t a" style="left:279px;top:521px;color:#ff00ff">: 5.000,</span>
<span class="t a" style="left:327px;top:521px;color:#00ff00">60.300</span>
<svg class="ab" style="left:365px;top:520px" width="7" height="12" viewBox="0 0 7 12"><path d="M3.5 0.5V11" stroke="#ff5050" stroke-width="1" fill="none"/><path d="M3.5 0L1.2 4.2H5.8Z" fill="#ff5050"/></svg>
<span class="t a" style="left:370.5px;top:521px;color:#00ff00">,</span>
<span class="t a" style="left:381px;top:521px;color:#ffffff">54.574</span>
<svg class="ab" style="left:419px;top:520px" width="7" height="12" viewBox="0 0 7 12"><path d="M3.5 0.5V11" stroke="#ff5050" stroke-width="1" fill="none"/><path d="M3.5 0L1.2 4.2H5.8Z" fill="#ff5050"/></svg>
<span class="t a" style="left:424.5px;top:521px;color:#ffffff">,</span>
<span class="t a" style="left:435px;top:521px;color:#ffff00">0.000,</span>
<span class="t a" style="left:474px;top:521px;color:#ff8000">0.000,</span>
<span class="t a" style="left:513px;top:521px;color:#ffffff">0.000,</span>
<span class="t a" style="left:552px;top:521px;color:#f01e42">0.000,</span>
<svg width="1612" height="842" viewBox="0 0 1612 842">
<path d="M932 515.5L938 512v7z" fill="#ff00ff"/>
<g shape-rendering="crispEdges">
<rect x="2" y="840" width="1" height="2" fill="#d80000"/>
<rect x="33" y="840" width="1" height="2" fill="#d80000"/>
<rect x="52" y="840" width="1" height="2" fill="#d80000"/>
<rect x="77" y="840" width="1" height="2" fill="#d80000"/>
<rect x="91" y="840" width="1" height="2" fill="#d80000"/>
<rect x="116" y="840" width="1" height="2" fill="#d80000"/>
<rect x="121" y="840" width="1" height="2" fill="#d80000"/>
<rect x="126" y="840" width="1" height="2" fill="#d80000"/>
<rect x="140" y="840" width="1" height="2" fill="#d80000"/>
<rect x="165" y="840" width="1" height="2" fill="#d80000"/>
<rect x="189" y="840" width="1" height="2" fill="#d80000"/>
<rect x="210" y="840" width="1" height="2" fill="#d80000"/>
<rect x="214" y="840" width="1" height="2" fill="#d80000"/>
<rect x="237" y="840" width="1" height="2" fill="#d80000"/>
<rect x="261" y="840" width="1" height="2" fill="#d80000"/>
<rect x="286" y="840" width="1" height="2" fill="#d80000"/>
<rect x="311" y="840" width="1" height="2" fill="#d80000"/>
<rect x="315" y="840" width="1" height="2" fill="#d80000"/>
<rect x="334" y="840" width="1" height="2" fill="#d80000"/>
<rect x="358" y="840" width="1" height="2" fill="#d80000"/>
<rect x="382" y="840" width="1" height="2" fill="#d80000"/>
<rect x="407" y="840" width="1" height="2" fill="#d80000"/>
<rect x="416" y="840" width="1" height="2" fill="#d80000"/>
<rect x="426" y="840" width="1" height="2" fill="#d80000"/>
<rect x="450" y="840" width="1" height="2" fill="#d80000"/>
<rect x="475" y="840" width="1" height="2" fill="#d80000"/>
<rect x="500" y="840" width="1" height="2" fill="#d80000"/>
<rect x="505" y="840" width="1" height="2" fill="#d80000"/>
<rect x="509" y="840" width="1" height="2" fill="#d80000"/>
<rect x="518" y="840" width="1" height="2" fill="#d80000"/>
<rect x="542" y="840" width="1" height="2" fill="#d80000"/>
<rect x="567" y="840" width="1" height="2" fill="#d80000"/>
<rect x="591" y="840" width="1" height="2" fill="#d80000"/>
<rect x="596" y="840" width="1" height="2" fill="#d80000"/>
<rect x="615" y="840" width="1" height="2" fill="#d80000"/>
<rect x="640" y="840" width="1" height="2" fill="#d80000"/>
<rect x="664" y="840" width="1" height="2" fill="#d80000"/>
<rect x="689" y="840" width="1" height="2" fill="#d80000"/>
<rect x="693" y="840" width="1" height="2" fill="#d80000"/>
<rect x="707" y="840" width="1" height="2" fill="#d80000"/>
<rect x="732" y="840" width="1" height="2" fill="#d80000"/>
<rect x="756" y="840" width="1" height="2" fill="#d80000"/>
<rect x="781" y="840" width="1" height="2" fill="#d80000"/>
<rect x="795" y="840" width="1" height="2" fill="#d80000"/>
<rect x="800" y="840" width="1" height="2" fill="#d80000"/>
<rect x="815" y="840" width="1" height="2" fill="#d80000"/>
<rect x="839" y="840" width="1" height="2" fill="#d80000"/>
<rect x="863" y="840" width="1" height="2" fill="#d80000"/>
<rect x="887" y="840" width="1" height="2" fill="#d80000"/>
<rect x="892" y="840" width="1" height="2" fill="#d80000"/>
<rect x="907" y="840" width="1" height="2" fill="#d80000"/>
<rect x="931" y="840" width="1" height="2" fill="#d80000"/>
<rect x="955" y="840" width="1" height="2" fill="#d80000"/>
<rect x="979" y="840" width="1" height="2" fill="#d80000"/>
<rect x="984" y="840" width="1" height="2" fill="#d80000"/>
<rect x="1004" y="840" width="1" height="2" fill="#d80000"/>
<rect x="1028" y="840" width="1" height="2" fill="#d80000"/>
<rect x="1052" y="840" width="1" height="2" fill="#d80000"/>
<rect x="1077" y="840" width="1" height="2" fill="#d80000"/>
<rect x="1096" y="840" width="1" height="2" fill="#d80000"/>
<rect x="1101" y="840" width="1" height="2" fill="#d80000"/>
<rect x="1272" y="840" width="1" height="2" fill="#d80000"/>
<rect x="1296" y="840" width="1" height="2" fill="#d80000"/>
<rect x="1305" y="840" width="1" height="2" fill="#d80000"/>
<rect x="1310" y="840" width="1" height="2" fill="#d80000"/>
<rect x="1339" y="840" width="1" height="2" fill="#d80000"/>
<rect x="1363" y="840" width="1" height="2" fill="#d80000"/>
<rect x="1387" y="840" width="1" height="2" fill="#d80000"/>
<rect x="1392" y="840" width="1" height="2" fill="#d80000"/>
<rect x="1412" y="840" width="1" height="2" fill="#d80000"/>
<rect x="1436" y="840" width="1" height="2" fill="#d80000"/>
<rect x="1460" y="840" width="1" height="2" fill="#d80000"/>
<rect x="1485" y="840" width="1" height="2" fill="#d80000"/>
<rect x="1490" y="840" width="1" height="2" fill="#d80000"/>
<rect x="1509" y="840" width="1" height="2" fill="#d80000"/>
<rect x="1524" y="840" width="1" height="2" fill="#d80000"/>
<rect x="1525" y="840" width="87" height="2" fill="#00008c"/>
</g>
</svg>
<div style="position:absolute;left:192px;top:115px;width:2px;height:2px;background:#ff0000"></div>
<span class="t a" style="left:193px;top:118px;color:#0a86ff">R</span><span class="t c" style="left:199px;top:117px;color:#0a86ff">顶</span>
<div style="position:absolute;left:249.5px;top:175px;width:2px;height:2px;background:#ff0000"></div>
<span class="t a" style="left:250.5px;top:178px;color:#ffffff">K</span><span class="t c" style="left:256.5px;top:177px;color:#ffffff">顶</span>
<div style="position:absolute;left:571px;top:286px;width:2px;height:2px;background:#ff0000"></div>
<span class="t a" style="left:572px;top:289px;color:#ffffff">K</span><span class="t c" style="left:578px;top:288px;color:#ffffff">顶</span>
<span class="t a" style="left:500px;top:425px;color:#ff00ff">K</span><span class="t c" style="left:506px;top:424px;color:#ff00ff">底</span>
<span class="t a" style="left:494px;top:435px;color:#ff0000">R</span><span class="t c" style="left:500px;top:434px;color:#ff0000">底</span>
<span class="t a" style="left:765px;top:474px;color:#ffff00">M</span><span class="t c" style="left:771px;top:473px;color:#ffff00">底</span>
<div style="position:absolute;left:1051px;top:287px;width:2px;height:2px;background:#ff0000"></div>
<span class="t a" style="left:1052px;top:290px;color:#0a86ff">R</span><span class="t c" style="left:1058px;top:289px;color:#0a86ff">顶</span>
<div style="position:absolute;left:1100px;top:192px;width:2px;height:2px;background:#ff0000"></div>
<span class="t a" style="left:1101px;top:195px;color:#ffffff">K</span><span class="t c" style="left:1107px;top:194px;color:#ffffff">顶</span>
<div style="position:absolute;left:1153px;top:135px;width:2px;height:2px;background:#ff0000"></div>
<span class="t a" style="left:1154px;top:138px;color:#ffffff">K</span><span class="t c" style="left:1160px;top:137px;color:#ffffff">顶</span>
<div style="position:absolute;left:1415px;top:269px;width:2px;height:2px;background:#ff0000"></div>
<span class="t a" style="left:1416px;top:272px;color:#ffffff">K</span><span class="t c" style="left:1422px;top:271px;color:#ffffff">顶</span>
<span class="t a" style="left:1504px;top:427px;color:#ff00ff">K</span><span class="t c" style="left:1510px;top:426px;color:#ff00ff">底</span>
<span class="t a" style="left:1517.5px;top:421px;color:#ffff00">M</span><span class="t c" style="left:1523.5px;top:420px;color:#ffff00">底</span>
<svg class="ab" style="left:834px;top:502px" width="14.3" height="9" viewBox="0 0 14.3 9"><path d="M0.5 4.5H14.3 M4.5 0.5L0.5 4.5L4.5 8.5" stroke="#fff" stroke-width="1" fill="none"/></svg>
<span class="t a" style="left:849.5px;top:501.3px;color:#ffffff">41.31</span>
<svg class="ab" style="left:122px;top:15.5px" width="11" height="9" viewBox="0 0 11 9"><path d="M0.5 4.5H11 M4.5 0.5L0.5 4.5L4.5 8.5" stroke="#fff" stroke-width="1" fill="none"/></svg>
<span class="t a" style="left:134.5px;top:14.8px;color:#ffffff">82.49</span>
</div>
</body></html>
